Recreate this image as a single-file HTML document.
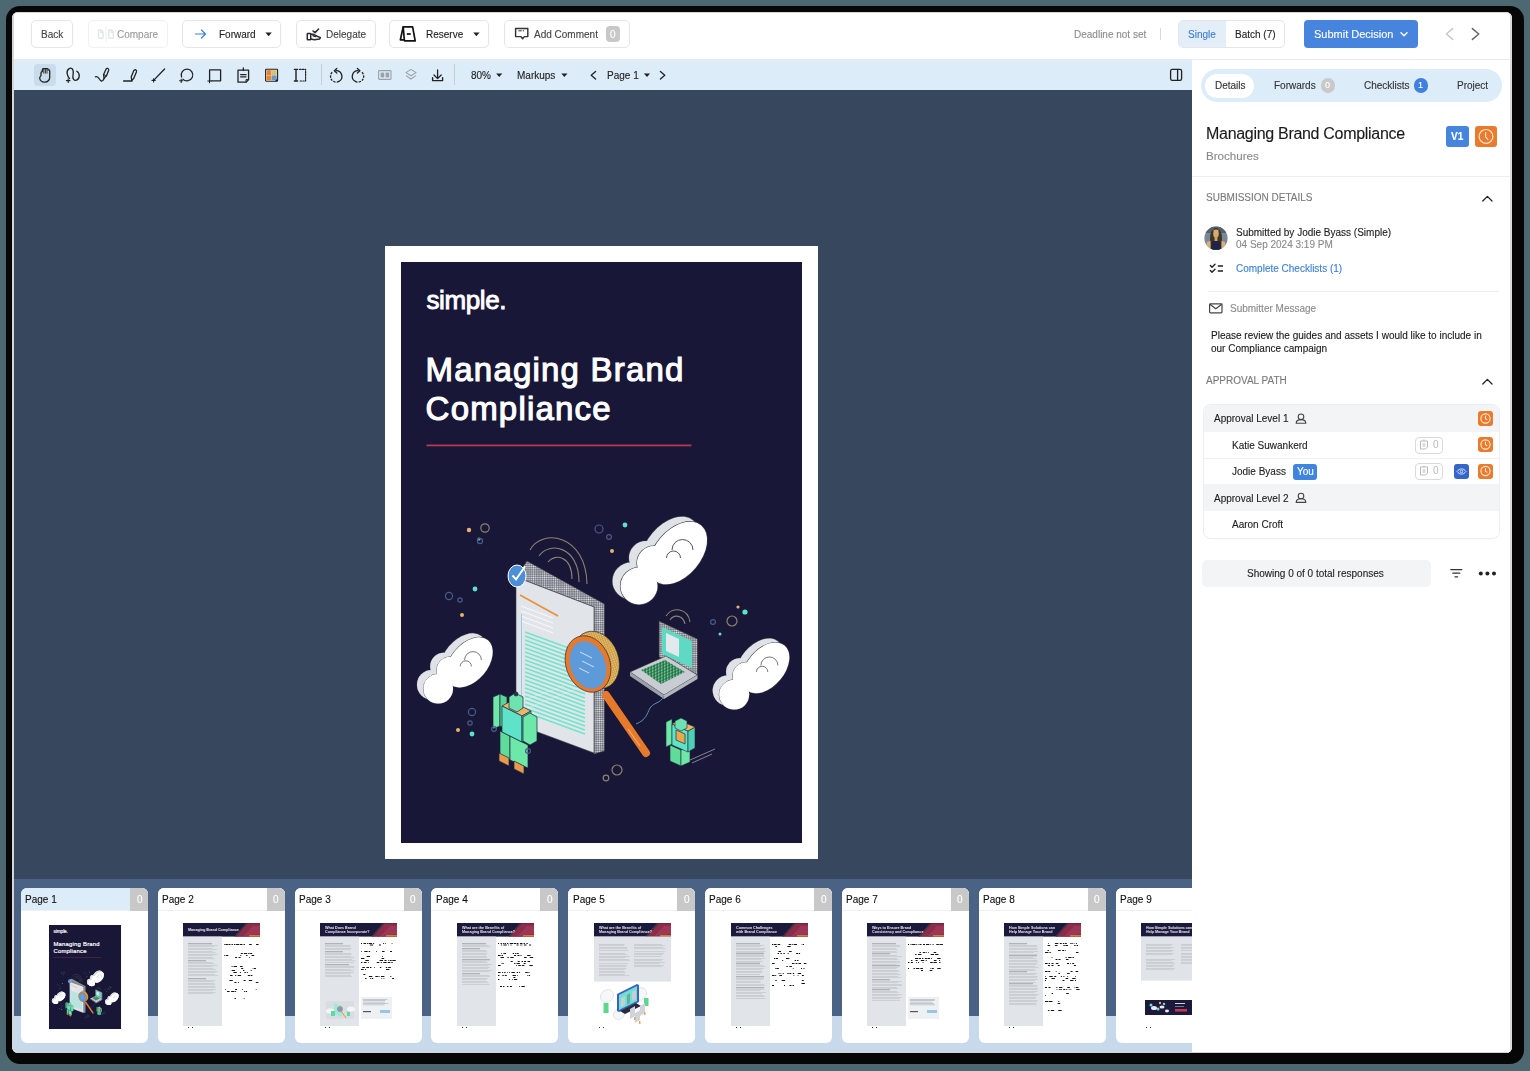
<!DOCTYPE html>
<html><head><meta charset="utf-8">
<style>
*{box-sizing:border-box;margin:0;padding:0}
html,body{width:1530px;height:1071px;overflow:hidden;background:#4d6870;font-family:"Liberation Sans",sans-serif;color:#222}
.a{position:absolute}
.tx{position:absolute;line-height:1;white-space:nowrap;will-change:transform;-webkit-text-stroke:0.12px currentColor}
svg{position:absolute;overflow:visible}
#frame{position:absolute;left:6px;top:6px;width:1518px;height:1058px;background:#070707;border-radius:14px}
#app{position:absolute;left:12px;top:12px;width:1500px;height:1041px;background:#fff;border-radius:6px;overflow:hidden}
#w{position:absolute;left:-12px;top:-12px;width:1530px;height:1071px}
.btn{position:absolute;top:20px;height:28px;border:1px solid #e3e5e9;border-radius:5px;background:#fff}
</style></head><body>
<div id="frame"></div>
<div id="app"><div id="w">
<div class="a" style="left:12px;top:12px;width:1500px;height:1px;background:#d4d6da;"></div>
<div class="a" style="left:1192px;top:59px;width:320px;height:1px;background:#e8eaee;"></div>
<div class="a" style="left:12px;top:59px;width:1180px;height:1px;background:#e8eaee;"></div>
<div class="btn" style="left:31px;width:42px;border-color:#e3e5e9"></div>
<div class="btn" style="left:88px;width:80px;border-color:#eff1f3"></div>
<div class="btn" style="left:182px;width:99px;border-color:#e3e5e9"></div>
<div class="btn" style="left:296px;width:80px;border-color:#e3e5e9"></div>
<div class="btn" style="left:389px;width:100px;border-color:#e3e5e9"></div>
<div class="btn" style="left:504px;width:126px;border-color:#e3e5e9"></div>
<div class="tx" style="left:40.5px;top:30.14px;font-size:10px;color:#444;">Back</div>
<div class="tx" style="left:117px;top:30.14px;font-size:10px;color:#9a9a9a;">Compare</div>
<div class="tx" style="left:218.5px;top:30.14px;font-size:10px;color:#1e1e1e;">Forward</div>
<div class="tx" style="left:325.5px;top:30.14px;font-size:10px;color:#444;">Delegate</div>
<div class="tx" style="left:425.5px;top:30.14px;font-size:10px;color:#1e1e1e;">Reserve</div>
<div class="tx" style="left:533.5px;top:30.14px;font-size:10px;color:#444;">Add Comment</div>
<svg style="left:0;top:0" width="1" height="1"><g fill="none" stroke="#e1e4e8" stroke-width="1.3" stroke-linejoin="round">
<path d="M98.5 29.8h2.6l1.9 2.2v6.2h-4.5z"/><path d="M108.8 29.8h2.6l1.9 2.2v6.2h-4.5z"/><path d="M100.8 30v2.4h2.2M111.1 30v2.4h2.2" stroke-width="1.1"/><path d="M106 26v16" stroke="#eef0f3" stroke-width="1.1"/></g></svg>
<svg style="left:0;top:0" width="1" height="1"><g fill="none" stroke="#3f7fd6" stroke-width="1.2" stroke-linecap="round" stroke-linejoin="round">
<path d="M195.5 34h10M201.5 30l4 4-4 4"/></g></svg>
<svg style="left:0;top:0" width="1" height="1"><path d="M265.40000000000003 32.6h6.4l-3.2 3.6z" fill="#222"/></svg>
<svg style="left:0;top:0" width="1" height="1"><path d="M473.2 32.6h6.4l-3.2 3.6z" fill="#222"/></svg>
<svg style="left:0;top:0" width="1" height="1"><g fill="none" stroke="#2a2a30" stroke-width="1.5" stroke-linejoin="round" stroke-linecap="round">
<path d="M313 31l2 1.6 3.6-3.6"/>
<rect x="307.3" y="33.4" width="3.4" height="6.4" rx="0.6"/>
<path d="M310.7 34.2h2.4l4 2 3.4 1.4-1 1.4-5 .8-3.8-.8"/><path d="M313 35.8l2.8 .8"/></g></svg>
<svg style="left:0;top:0" width="1" height="1"><g fill="none" stroke="#111" stroke-width="1.7" stroke-linejoin="round">
<path d="M403.2 26.8h9.4l2.6 14h-10.8z"/><path d="M403.2 26.8l-2.8 13h4"/><path d="M406.8 34h4"/></g></svg>
<svg style="left:0;top:0" width="1" height="1"><g fill="none" stroke="#333" stroke-width="1.45" stroke-linejoin="round">
<path d="M515.6 28.4h12.2v8.2h-3.4l-1.8 2.2-1.6-2.2h-5.4z"/><path d="M518.4 30.8h3.4M522.8 30.8h1.2" stroke-width="1"/></g></svg>
<div class="a" style="left:606px;top:26px;width:14px;height:16px;border-radius:4px;background:#c8c8c8"></div>
<div class="tx" style="left:610.2px;top:29.74px;font-size:10px;color:#fff;">0</div>
<div class="tx" style="left:1073.5px;top:30.33px;font-size:10px;color:#8c8c8c;">Deadline not set</div>
<div class="a" style="left:1159.5px;top:28px;width:1px;height:12px;background:#d9d9d9;"></div>
<div class="btn" style="left:1178px;width:107px;overflow:hidden"><div class="a" style="left:0;top:0;width:47px;height:26px;background:#e4eef8"></div></div>
<div class="tx" style="left:1188px;top:30.14px;font-size:10px;color:#3d7dd3;">Single</div>
<div class="tx" style="left:1235px;top:30.14px;font-size:10px;color:#222;">Batch (7)</div>
<div class="a" style="left:1304px;top:20px;width:114px;height:28px;border-radius:4px;background:#4684dd"></div>
<div class="tx" style="left:1313.5px;top:29.29px;font-size:11px;color:#fff;">Submit Decision</div>
<svg style="left:0;top:0" width="1" height="1"><g fill="none" stroke-linecap="round" stroke-linejoin="round">
<path d="M1401 32.8l3 3 3-3" stroke="#fff" stroke-width="1.5"/>
<path d="M1452.6 28.6L1446.4 34l6.2 5.4" stroke="#c5c9cf" stroke-width="1.5"/>
<path d="M1472.4 28.6L1478.8 34l-6.4 5.4" stroke="#63666e" stroke-width="1.5"/></g></svg>
<div class="a" style="left:12px;top:60px;width:1180px;height:30px;background:#dcecf8;"></div>
<div class="a" style="left:34px;top:64px;width:22px;height:22px;border-radius:4px;background:#c9dcec"></div>
<svg style="left:0;top:0" width="1" height="1"><g fill="none" stroke="#222" stroke-width="1.3" stroke-linecap="round" stroke-linejoin="round">
<!-- hand -->
<path d="M41 75.5v-2.5c0-.8.6-1.3 1.3-1.3v-1.8c0-.7.5-1.2 1.2-1.2h3.6c.7 0 1.2.5 1.2 1.2v-.2c.8 0 1.4.6 1.4 1.4v6.4c0 2.6-2.2 4.6-4.6 4.6h-.8c-2.6 0-4.6-2-4.6-4.6z"/>
<path d="M43.8 69v4.2M45.4 69v4.2M47 69v4.2" stroke-width="0.9"/>
<!-- lasso -->
<path d="M69.6 78.6C67.4 76.4 65.4 71 69.2 68.6C72.6 66.8 74 71 73 75C72.2 79 74.2 80.8 76.4 80.2C79.6 79.2 80.6 73.6 76.8 71.2"/>
<path d="M66.4 80.6h3.6M68.2 78.8v3.6" stroke-width="1.1"/>
<!-- pen -->
<path d="M95.4 76.8c1.8-.8 3 .4 4 2.2.9 1.6 2.2 2.8 3.6 1.4l1.2-2"/>
<path d="M104 78.2l-.4-3.8 2.4-5.2c.4-.8 1.3-1.1 2-.7.7.4.9 1.2.6 2l-2.2 5.4z"/><path d="M103.8 74.6l2.6 1.2" stroke-width="1"/>
<!-- highlighter -->
<path d="M123.6 81h8.4"/>
<path d="M131.8 80.6l-.6-3.6 2.6-6.4c.4-.8 1.4-1.1 2-.7.7.4.9 1.2.6 2l-2.6 6.4z"/>
<!-- line -->
<path d="M153.6 80.4l11-11.4"/><path d="M152 80.4h3.2M153.6 78.8v3.2" stroke-width="1.1"/>
<!-- circle -->
<path d="M182.9 79.1A5.8 5.8 0 1 0 181.55 77"/><path d="M179.6 80.8h3.2M181.2 79.2v3.2" stroke-width="1.1"/>
<!-- square -->
<path d="M209.6 79.6v-9.8h11v11h-9.6"/><path d="M207.8 81h3.4M209.5 79.3v3.4" stroke-width="1.1"/>
<!-- clipboard -->
<path d="M238 70.2h10.6v9.4l-2.6 2.6h-8z"/><path d="M243.3 68v2.4M240.6 74.6h5.4M240.6 76.8h5.4"/><path d="M246 82.2v-2.6h2.6" stroke-width="1"/>
<!-- palette -->
<rect x="265.6" y="69.2" width="12" height="12" rx="0.6" stroke-width="1.1"/>
<!-- text crop -->
<path d="M294.4 69.4h3.2M294.4 81h3.2M296 69.4v11.6" stroke-width="1.4"/>
<path d="M299.6 69.4h6v11.6h-6" stroke-dasharray="1.4 1.3" stroke-width="1.2"/>
<!-- rotate left -->
<path d="M336.2 70.7A5.7 5.7 0 0 1 338.88 81.43"/><path d="M338.88 81.43A5.7 5.7 0 0 1 332.54 72.03" stroke-dasharray="2.3 1.1" stroke-linecap="butt"/><path d="M336.8 68.5l-2.5 2.3 2.5 2.3"/>
<!-- rotate right -->
<path d="M358 70.7A5.7 5.7 0 0 0 355.32 81.43"/><path d="M355.32 81.43A5.7 5.7 0 0 0 361.66 72.03" stroke-dasharray="2.3 1.1" stroke-linecap="butt"/><path d="M357.4 68.5l2.5 2.3-2.5 2.3"/>
<!-- download -->
<path d="M437.6 70v8.6M434 75l3.6 3.6 3.6-3.6"/><path d="M432.6 77.6v3h10v-3" stroke-width="1.4"/>
<!-- panel toggle -->
<rect x="1170.6" y="69.4" width="11" height="11" rx="1.6" stroke-width="1.3"/><path d="M1177.6 69.6v10.8" stroke-width="1.3"/>
</g>
<g fill="none" stroke="#9aa1a8" stroke-width="1.1" stroke-linejoin="round">
<rect x="378.6" y="70.6" width="12.4" height="8.8" rx="0.6"/>
<path d="M411 69.4l5 3.2-5 3.2-5-3.2z"/><path d="M406 75.6l5 3.4 5-3.4"/>
</g>
<rect x="380.6" y="72.6" width="3.6" height="4.8" fill="#9aa1a8"/><rect x="385.6" y="72.6" width="3.6" height="4.8" fill="#9aa1a8"/>
<rect x="266.6" y="70.2" width="4.8" height="4.8" fill="#e8832f"/><rect x="271.8" y="70.2" width="4.8" height="4.8" fill="#d4c56a"/>
<rect x="266.6" y="75.4" width="4.8" height="4.8" fill="#e8832f"/><rect x="271.8" y="75.4" width="4.8" height="4.8" fill="#6d95c6"/>
<path d="M274.8 81.2l2.6-2.6v2.6z" fill="#222"/>
</svg>
<div class="a" style="left:320.5px;top:64px;width:1px;height:21px;background:#c6cdd4;"></div>
<div class="a" style="left:453.5px;top:64px;width:1px;height:21px;background:#c6cdd4;"></div>
<div class="tx" style="left:470.5px;top:71.13px;font-size:10px;color:#222;">80%</div>
<div class="tx" style="left:517px;top:71.13px;font-size:10px;color:#222;">Markups</div>
<div class="tx" style="left:606.5px;top:71.13px;font-size:10px;color:#222;">Page 1</div>
<svg style="left:0;top:0" width="1" height="1"><path d="M496.09999999999997 73.6h6.2l-3.1 3.4z" fill="#222"/><path d="M561.3 73.6h6.2l-3.1 3.4z" fill="#222"/><path d="M643.9 73.6h6.2l-3.1 3.4z" fill="#222"/><g fill="none" stroke="#222" stroke-width="1.3" stroke-linecap="round" stroke-linejoin="round">
<path d="M595.6 71.4l-4.4 3.8 4.4 3.8M660.4 71.4l4.4 3.8-4.4 3.8"/></g></svg>
<div class="a" style="left:14px;top:90px;width:1178px;height:789px;background:#37475e;"></div>
<div class="a" style="left:385px;top:246px;width:433px;height:613px;background:#fff;"></div>
<div class="a" style="left:401px;top:262px;width:401px;height:581px;background:#181737;overflow:hidden">
<svg style="left:-401px;top:-262px" width="1530" height="1071">
<defs>
<pattern id="dots" width="2.2" height="2.2" patternUnits="userSpaceOnUse"><rect width="2.2" height="2.2" fill="#6f737b"/><circle cx="1.1" cy="1.1" r="0.75" fill="#e6e8ec"/></pattern>
<pattern id="gdots" width="2.2" height="2.2" patternUnits="userSpaceOnUse"><rect width="2.2" height="2.2" fill="#c99a3e"/><circle cx="1.1" cy="1.1" r="0.7" fill="#f0d08a"/></pattern>
<pattern id="keys" width="3" height="3" patternUnits="userSpaceOnUse" patternTransform="skewY(-24)"><rect width="3" height="3" fill="#2b3b3a"/><rect x="0.5" y="0.5" width="2.2" height="2.2" fill="#5be08f"/></pattern>
<g id="cloud">
 <g fill="#dfe2e6" stroke="#40404c" stroke-width="1.2">
  <circle cx="31" cy="76" r="18.5"/><circle cx="46" cy="53" r="17"/><ellipse cx="70" cy="43" rx="23" ry="36" transform="rotate(40 70 43)"/>
 </g>
 <g fill="#dfe2e6">
  <circle cx="31" cy="76" r="18.5"/><circle cx="46" cy="53" r="17"/><ellipse cx="70" cy="43" rx="23" ry="36" transform="rotate(40 70 43)"/>
 </g>
 <g fill="#fff" stroke="#40404c" stroke-width="1.2">
  <circle cx="39" cy="81" r="18.5"/><circle cx="54" cy="58" r="17"/><ellipse cx="78" cy="48" rx="23" ry="36" transform="rotate(40 78 48)"/>
 </g>
 <g fill="#fff">
  <circle cx="39" cy="81" r="18.5"/><circle cx="54" cy="58" r="17"/><ellipse cx="78" cy="48" rx="23" ry="36" transform="rotate(40 78 48)"/>
 </g>
 <g fill="none" stroke="#55555f" stroke-width="1"><path d="M72 45a10.5 10.5 0 0 1 21 0"/><path d="M66.5 53a7 7 0 0 1 14 0"/></g>
</g>
</defs>
<g id="coverg"><rect x="401" y="262" width="401" height="581" fill="#181737"/>
<text x="426.5" y="309" font-family="Liberation Sans" font-size="26" letter-spacing="-0.4" fill="#fff" stroke="#fff" stroke-width="0.9">simple.</text>
<text x="425.6" y="380.6" font-family="Liberation Sans" font-size="33" letter-spacing="1.2" fill="#fff" stroke="#fff" stroke-width="1.1">Managing Brand</text>
<text x="425.6" y="419.6" font-family="Liberation Sans" font-size="33" letter-spacing="1.2" fill="#fff" stroke="#fff" stroke-width="1.1">Compliance</text>
<rect x="426.5" y="444.5" width="265" height="1.8" fill="#b8394c"/>
<use href="#cloud" transform="translate(600 505)"/>
<use href="#cloud" transform="translate(407 624) scale(0.8)"/>
<use href="#cloud" transform="translate(702.6 629) scale(0.81)"/>

<!-- wifi arcs over doc -->
<g fill="none" stroke="#8d8270" stroke-width="1.1">
 <path d="M530 550c12-22 56-16 57 34"/><path d="M539 556c10-15 40-10 40 26"/><path d="M548 562c7-9 24-6 24 17"/>
 <path d="M666 616c6-10 22-8 24 6"/><path d="M670 620c4-6 13-5 15 4"/>
</g>

<!-- document slab -->
<polygon points="527,561 604.5,604 604.5,751 594,754 594,607 516,577" fill="url(#dots)" stroke="#333" stroke-width="0.5"/>
<polygon points="516,577 594,607 594,753 516,724" fill="#e1e4e9" stroke="#3a3a48" stroke-width="0.6"/>
<g stroke="#f6f7f9" stroke-width="1.2">
 <path d="M521 606l32 12M521 611l32 12M521 616l32 12M521 621l32 12"/>
</g>
<path d="M520 595l38 21" stroke="#e8913a" stroke-width="1.6"/>
<g stroke="#6fe6cc" stroke-width="1.6"><path d="M525 632l60 22M525 636l60 22M525 640l60 22M525 644l60 22M525 648l60 22M525 652l60 22M525 656l60 22M525 660l60 22M525 664l60 22M525 668l60 22M525 672l60 22M525 676l60 22M525 680l60 22M525 684l60 22M525 688l60 22M525 692l60 22M525 696l60 22M525 700l60 22M525 704l60 22M525 708l60 22M525 712l60 22"/></g><path d="M521.5 614v82" stroke="#7fc4ea" stroke-width="0.8"/><path d="M524 700l40-14M528 708l50-20" stroke="#f2f4f8" stroke-width="0.6" opacity="0.7"/>
<ellipse cx="517" cy="576" rx="9" ry="11" fill="#4d8fd6" stroke="#fff" stroke-width="1"/>
<path d="M512.5 575.5l3.5 4 9-13" fill="none" stroke="#fff" stroke-width="2"/>

<!-- magnifier -->
<ellipse cx="596" cy="660" rx="22.5" ry="29.5" transform="rotate(-20 596 660)" fill="url(#gdots)" stroke="#2a2030" stroke-width="0.6"/>
<ellipse cx="588" cy="664" rx="22" ry="29" transform="rotate(-20 588 664)" fill="#e7792b" stroke="#2a2030" stroke-width="0.6"/>
<ellipse cx="588" cy="665" rx="17.5" ry="24.5" transform="rotate(-20 588 665)" fill="#5e9ad8"/>
<g stroke="#d9e8f6" stroke-width="0.9"><path d="M580 652l12 6M582 661l12 6M579 668l10 5"/></g>
<path d="M606 695l40 58" stroke="#e7792b" stroke-width="8" stroke-linecap="round"/>
<path d="M628 729l12 17" stroke="#f3c9a0" stroke-width="0.8"/>

<!-- laptop -->
<polygon points="659,621 697.5,639 697.5,675 659,657" fill="url(#dots)" stroke="#333" stroke-width="0.6"/>
<polygon points="662,627 692,641 692,668 662,654" fill="#5fd9c3"/>
<polygon points="666,633 679,639 679,657 666,651" fill="#e3e8ec"/>
<polygon points="630,672 666,656 697.5,675 664,695" fill="#c9ccd2" stroke="#333" stroke-width="0.6"/>
<polygon points="630,672 664,695 664,699 630,676" fill="#9da0a6"/>
<polygon points="664,695 697.5,675 697.5,679 664,699" fill="#b3b6bc"/>
<polygon points="641,670 665,660 685,672 661,684" fill="url(#keys)"/>
<path d="M664 696c-4 8-10 6-14 12-3 6-4 12-14 16" fill="none" stroke="#5a8fb5" stroke-width="1"/>

<!-- left robot -->
<g stroke="#1e2638" stroke-width="0.7" stroke-linejoin="round">
<polygon points="500,731 510,736 510,760 500,755" fill="#5fdc9a"/>
<polygon points="510,736 528,745 528,768 510,760" fill="#6ee8a8"/>
<polygon points="499,753 509,758 509,766 499,761" fill="#e89a4e"/>
<polygon points="514,761 524,766 524,774 514,769" fill="#e89a4e"/>
<polygon points="493,697 500,694 500,726 493,729" fill="#6ee8a8"/>
<polygon points="500,694 507,697 507,729 500,726" fill="#5ad596"/>
<polygon points="502,706 511,701 531,711 522,716" fill="#f0b56a"/>
<polygon points="502,706 522,716 522,742 502,732" fill="#5ee3c8"/>
<polygon points="522,716 531,711 531,737 522,742" fill="#4fcfb5"/>
<polygon points="523,717 530,713 537,717 537,741 530,745 523,741" fill="#6ee8a8"/>
<polygon points="509,697 515,693 523,697 523,708 517,712 509,708" fill="#6ee2b0"/>
<circle cx="516" cy="694" r="2" fill="#2a3550"/>
</g>
<!-- right robot -->
<g stroke="#1e2638" stroke-width="0.6" stroke-linejoin="round">
<polygon points="670,745 681,750 681,766 670,761" fill="#5fdc9a"/>
<polygon points="681,750 690,746 690,762 681,766" fill="#6ee8a8"/>
<polygon points="666,722 672,719 672,744 666,747" fill="#6ee8a8"/>
<polygon points="672,724 688,731 688,752 672,745" fill="#5ee3c8"/>
<polygon points="688,731 695,727 695,748 688,752" fill="#4fcfb5"/>
<polygon points="672,724 678,720 695,727 688,731" fill="#f0b56a"/>
<polygon points="675,721 681,718 687,721 687,728 681,731 675,728" fill="#6ee2b0"/>
<rect x="676" y="731" width="9" height="10" fill="#e8a94e" transform="skewY(24) translate(0 -302)"/>
</g>
<path d="M690 760l25-11M692 763l20-9" stroke="#ccc" stroke-width="0.6"/>

<!-- dots -->
<g fill="#e8b26a"><circle cx="469" cy="530" r="2.2"/><circle cx="612" cy="551" r="2"/><circle cx="462" cy="615" r="2"/><circle cx="458" cy="730" r="2"/><circle cx="738" cy="607" r="1.6"/></g>
<g fill="#5fe3c8"><circle cx="625" cy="525" r="2.4"/><circle cx="475" cy="589" r="2.4"/><circle cx="472" cy="734" r="2.4"/><circle cx="745" cy="612" r="2.6"/><circle cx="479" cy="539" r="1.5"/><circle cx="720" cy="634" r="1.5"/></g>
<g fill="none" stroke="#8d8270" stroke-width="1.2"><circle cx="485" cy="528" r="4.2"/><circle cx="732" cy="621" r="5"/><circle cx="617" cy="770" r="5"/><circle cx="606" cy="778" r="2.8"/></g>
<g fill="none" stroke="#4b5a88" stroke-width="1.2"><circle cx="480" cy="541" r="2.6"/><circle cx="449" cy="596" r="3.6"/><circle cx="460" cy="600" r="2.2"/><circle cx="599" cy="529" r="4"/><circle cx="609" cy="537" r="2.4"/><circle cx="472" cy="712" r="3.6"/><circle cx="470" cy="723" r="2.2"/><circle cx="713" cy="622" r="2.4"/><circle cx="494" cy="729" r="2.4"/><circle cx="528" cy="751" r="2.4"/></g>
</g></svg></div>
<div class="a" style="left:1192px;top:60px;width:320px;height:993px;background:#fff;"></div>
<div class="a" style="left:1201px;top:69px;width:301px;height:33px;border-radius:17px;background:#dcecf8"></div>
<div class="a" style="left:1205px;top:74px;width:49px;height:24px;border-radius:12px;background:#fff"></div>
<div class="tx" style="left:1214.5px;top:81.03px;font-size:10px;color:#333;">Details</div>
<div class="tx" style="left:1274px;top:81.03px;font-size:10px;color:#333;">Forwards</div>
<div class="a" style="left:1321px;top:78px;width:14px;height:15px;border-radius:8px;background:#c9c9c9"></div>
<div class="tx" style="left:1325.3px;top:81.38px;font-size:9px;color:#fff;">0</div>
<div class="tx" style="left:1364px;top:81.03px;font-size:10px;color:#333;">Checklists</div>
<div class="a" style="left:1414px;top:78px;width:14px;height:15px;border-radius:8px;background:#3f7fe0"></div>
<div class="tx" style="left:1418.3px;top:81.38px;font-size:9px;color:#fff;">1</div>
<div class="tx" style="left:1457px;top:81.03px;font-size:10px;color:#333;">Project</div>
<div class="tx" style="left:1205.5px;top:125.56px;font-size:16px;color:#1a1a1a;letter-spacing:-0.3px">Managing Brand Compliance</div>
<div class="tx" style="left:1205.5px;top:149.68px;font-size:11.6px;color:#8a8a8a;">Brochures</div>
<div class="a" style="left:1446px;top:126px;width:23px;height:21px;border-radius:3px;background:#4684dd"></div>
<div class="tx" style="left:1450.5px;top:132.23px;font-size:10px;color:#fff;font-weight:bold">V1</div>
<div class="a" style="left:1475px;top:126px;width:22px;height:21px;border-radius:3px;background:#e87b2e"></div>
<svg style="left:0;top:0" width="1" height="1"><g fill="none" stroke="#fbe3cf" stroke-width="1.2"><circle cx="1486" cy="136.4" r="6.9"/><path d="M1485.6 132.2v4.6l2.6 3"/></g></svg>
<div class="a" style="left:1192px;top:176px;width:320px;height:1px;background:#eceef0;"></div>
<div class="tx" style="left:1205.5px;top:193.03px;font-size:10px;color:#7a7a7a;letter-spacing:0px">SUBMISSION DETAILS</div>
<svg style="left:0;top:0" width="1" height="1"><g fill="none" stroke="#222" stroke-width="1.3" stroke-linecap="round" stroke-linejoin="round"><path d="M1482.8 201l4.6-4.6 4.6 4.6"/><path d="M1482.8 384l4.6-4.6 4.6 4.6"/></g></svg>
<svg style="left:0;top:0" width="1" height="1"><defs><clipPath id="av"><circle cx="1216" cy="238.2" r="11.6"/></clipPath></defs>
<g clip-path="url(#av)"><rect x="1204" y="226" width="24" height="24" fill="#7a8796"/>
<rect x="1204" y="226" width="24" height="7" fill="#56616e"/>
<path d="M1210 251v-12c0-7 2.5-11 6-11s6 4 6 11v12z" fill="#3d3526"/>
<ellipse cx="1216" cy="233.6" rx="2.8" ry="4.2" fill="#d9ab73"/>
<rect x="1214.6" y="236" width="2.8" height="5" fill="#d2a26a"/>
<path d="M1211 251l.6-10h8.8l.6 10z" fill="#1f2444"/>
<path d="M1205 251l2-9 3.6-1.2v10.2z M1227 251l-2-9-3.6-1.2v10.2z" fill="#dcae78"/>
<path d="M1213.4 229.6l1.2 1.4M1218.4 229.6l-1.2 1.6" stroke="#e9c48e" stroke-width="0.8"/>
</g></svg>
<div class="tx" style="left:1235.5px;top:228.03px;font-size:10px;color:#222;">Submitted by Jodie Byass (Simple)</div>
<div class="tx" style="left:1235.5px;top:240.44px;font-size:10px;color:#8a8a8a;">04 Sep 2024 3:19 PM</div>
<svg style="left:0;top:0" width="1" height="1"><g fill="none" stroke="#222" stroke-width="1.4" stroke-linecap="round" stroke-linejoin="round">
<path d="M1210.4 265.6l1.6 1.6 3-3M1210.4 270.6l1.6 1.6 3-3"/><path d="M1217.8 266h5.2M1217.8 271h5.2" stroke-width="1.6" stroke-linecap="butt"/></g></svg>
<div class="tx" style="left:1235.5px;top:264.04px;font-size:10px;color:#3a7fd6;">Complete Checklists (1)</div>
<div class="a" style="left:1208px;top:291px;width:291px;height:1px;background:#eceef0;"></div>
<svg style="left:0;top:0" width="1" height="1"><g fill="none" stroke="#444" stroke-width="1.2" stroke-linejoin="round"><rect x="1209.6" y="303.8" width="12.4" height="9" rx="0.8"/><path d="M1209.8 304.2l6 4.6 6-4.6"/></g></svg>
<div class="tx" style="left:1229.5px;top:304.24px;font-size:10px;color:#8a8a8a;">Submitter Message</div>
<div class="tx" style="left:1211px;top:330.84px;font-size:10px;color:#1a1a1a;">Please review the guides and assets I would like to include in</div>
<div class="tx" style="left:1211px;top:343.64px;font-size:10px;color:#1a1a1a;">our Compliance campaign</div>
<div class="tx" style="left:1205.5px;top:376.44px;font-size:10px;color:#7a7a7a;">APPROVAL PATH</div>
<div class="a" style="left:1204px;top:405px;width:295px;height:133px;border-radius:7px;background:#fff;box-shadow:0 0 0 1px #eceef0, 0 1px 2px rgba(0,0,0,0.06);overflow:hidden">
<div class="a" style="left:0;top:0;width:295px;height:27px;background:#f3f4f6"></div>
<div class="a" style="left:0;top:79px;width:295px;height:27px;background:#f3f4f6"></div>
<div class="a" style="left:0;top:53px;width:295px;height:1px;background:#eef0f2"></div>
</div>
<div class="tx" style="left:1213.8px;top:414.24px;font-size:10px;color:#1e1e1e;">Approval Level 1</div>
<div class="tx" style="left:1213.8px;top:493.94px;font-size:10px;color:#1e1e1e;">Approval Level 2</div>
<div class="tx" style="left:1232px;top:440.84px;font-size:10px;color:#1e1e1e;">Katie Suwankerd</div>
<div class="tx" style="left:1232px;top:467.34px;font-size:10px;color:#1e1e1e;">Jodie Byass</div>
<div class="tx" style="left:1232px;top:520.03px;font-size:10px;color:#1e1e1e;">Aaron Croft</div>
<svg style="left:0;top:0" width="1" height="1"><g fill="none" stroke="#444" stroke-width="1.1"><circle cx="1301" cy="416.8" r="2.8"/><path d="M1296.2 423.2c0-2.4 2-3.6 4.8-3.6s4.8 1.2 4.8 3.6z"/></g></svg>
<svg style="left:0;top:0" width="1" height="1"><g fill="none" stroke="#444" stroke-width="1.1"><circle cx="1301" cy="496" r="2.8"/><path d="M1296.2 502.4c0-2.4 2-3.6 4.8-3.6s4.8 1.2 4.8 3.6z"/></g></svg>
<div class="a" style="left:1478px;top:411px;width:15px;height:15px;border-radius:3px;background:#e87b2e"></div>
<svg style="left:0;top:0" width="1" height="1"><g fill="none" stroke="#fde6d2" stroke-width="1.1"><circle cx="1485.5" cy="418.5" r="4.6"/><path d="M1485.5 415.8v2.9l1.8 1.2"/></g></svg>
<div class="a" style="left:1478px;top:437px;width:15px;height:15px;border-radius:3px;background:#e87b2e"></div>
<svg style="left:0;top:0" width="1" height="1"><g fill="none" stroke="#fde6d2" stroke-width="1.1"><circle cx="1485.5" cy="444.5" r="4.6"/><path d="M1485.5 441.8v2.9l1.8 1.2"/></g></svg>
<div class="a" style="left:1478px;top:463.5px;width:15px;height:15px;border-radius:3px;background:#e87b2e"></div>
<svg style="left:0;top:0" width="1" height="1"><g fill="none" stroke="#fde6d2" stroke-width="1.1"><circle cx="1485.5" cy="471.0" r="4.6"/><path d="M1485.5 468.3v2.9l1.8 1.2"/></g></svg>
<div class="a" style="left:1415px;top:436.5px;width:28px;height:17px;border-radius:4px;border:1px solid #d9d9d9;background:#fff"></div>
<svg style="left:0;top:0" width="1" height="1"><g fill="none" stroke="#bbb" stroke-width="1"><path d="M1420.5 441.0h7v6l-2 2h-5z"/><path d="M1422.5 444.0h3M1422.5 446.0h3M1424 439.5v2"/></g></svg>
<div class="tx" style="left:1432.5px;top:440.14px;font-size:10px;color:#bdbdbd;">0</div>
<div class="a" style="left:1415px;top:462.5px;width:28px;height:17px;border-radius:4px;border:1px solid #d9d9d9;background:#fff"></div>
<svg style="left:0;top:0" width="1" height="1"><g fill="none" stroke="#bbb" stroke-width="1"><path d="M1420.5 467.0h7v6l-2 2h-5z"/><path d="M1422.5 470.0h3M1422.5 472.0h3M1424 465.5v2"/></g></svg>
<div class="tx" style="left:1432.5px;top:466.14px;font-size:10px;color:#bdbdbd;">0</div>
<div class="a" style="left:1293px;top:463.5px;width:24px;height:16px;border-radius:3px;background:#3f85e0"></div>
<div class="tx" style="left:1296.5px;top:467.04px;font-size:10px;color:#fff;">You</div>
<div class="a" style="left:1454px;top:464px;width:15px;height:15px;border-radius:3px;background:#3565c8"></div>
<svg style="left:0;top:0" width="1" height="1"><g fill="none" stroke="#cfe0ff" stroke-width="1"><path d="M1457 471.5c2.5-3.5 6.5-3.5 9 0-2.5 3.5-6.5 3.5-9 0z"/><circle cx="1461.5" cy="471.5" r="1.3"/></g></svg>
<div class="a" style="left:1202px;top:560px;width:229px;height:27px;border-radius:5px;background:#f3f4f6"></div>
<div class="tx" style="left:1247.3px;top:569.33px;font-size:10px;color:#1e1e1e;">Showing 0 of 0 total responses</div>
<svg style="left:0;top:0" width="1" height="1"><g fill="none" stroke="#333" stroke-width="1.3" stroke-linecap="round"><path d="M1450.8 569.6h11M1452.8 573.2h7M1455 576.8h2.6"/></g><g fill="#222"><circle cx="1480.8" cy="573.4" r="2"/><circle cx="1487.4" cy="573.4" r="2"/><circle cx="1494" cy="573.4" r="2"/></g></svg>
<div class="a" style="left:1510px;top:12px;width:2px;height:1041px;background:#d9dbdf;"></div>
<div class="a" style="left:14px;top:879px;width:1178px;height:137px;background:#4a6385;"></div>
<div class="a" style="left:14px;top:1016px;width:1178px;height:37px;background:#c8d9eb;"></div>
<div class="a" style="left:12px;top:12px;width:2px;height:1041px;background:#d4d6da;"></div>
<div class="a" style="left:21.00px;top:888px;width:127px;height:155px;border-radius:6px;background:#fff;overflow:hidden"><div class="a" style="left:0;top:0;width:127px;height:23px;background:#dcecf8;border-bottom:1px solid #eef0f3"></div><div class="a" style="left:109px;top:0;width:18px;height:22.5px;background:#c8c8c8"></div></div>
<div class="tx" style="left:25.3px;top:894.74px;font-size:10px;color:#111;">Page 1</div>
<div class="tx" style="left:136.5px;top:894.74px;font-size:10px;color:#fff;">0</div>
<svg style="left:49.00px;top:925px" width="77" height="106"><use href="#coverg" transform="scale(0.1796 0.179) translate(-401 -262)"/></svg>
<div class="a" style="left:157.83px;top:888px;width:127px;height:155px;border-radius:6px;background:#fff;overflow:hidden"><div class="a" style="left:0;top:0;width:127px;height:23px;background:#fff;border-bottom:1px solid #eef0f3"></div><div class="a" style="left:109px;top:0;width:18px;height:22.5px;background:#c8c8c8"></div></div>
<div class="tx" style="left:162.13px;top:894.74px;font-size:10px;color:#111;">Page 2</div>
<div class="tx" style="left:273.33px;top:894.74px;font-size:10px;color:#fff;">0</div>
<svg style="left:183.33px;top:923px" width="77" height="106"><rect x="0" y="0" width="77" height="13.6" fill="#1b1a3c"/><polygon points="53,13.6 64.5,0.3 77,0.3 77,13.6" fill="#8b2d48"/><polygon points="60,13.6 70,3 77,3 77,11" fill="#a0395a" opacity="0.8"/><path d="M52 13.6L63.5 0.3" stroke="#4a3a48" stroke-width="1.2"/><rect x="66" y="12" width="11" height="1.6" fill="#c9803a"/><text x="5" y="8.2" font-size="3.7" font-family="Liberation Sans" font-weight="bold" fill="#e8e8f0">Managing Brand Compliance</text><rect x="0" y="13.6" width="39" height="89.4" fill="#e1e4e8"/><rect x="5" y="20.4" width="24" height="0.8" fill="#8d939b"/><rect x="5" y="22.0" width="29.7" height="0.55" fill="#b9bdc3"/><rect x="5" y="23.5" width="26.4" height="0.55" fill="#b9bdc3"/><rect x="5" y="25.0" width="24.3" height="0.55" fill="#b9bdc3"/><rect x="5" y="26.5" width="28.9" height="0.55" fill="#b9bdc3"/><rect x="5" y="28.0" width="24.6" height="0.55" fill="#b9bdc3"/><rect x="5" y="29.5" width="27.5" height="0.55" fill="#b9bdc3"/><rect x="5" y="31.0" width="29.5" height="0.55" fill="#b9bdc3"/><rect x="5" y="32.5" width="25.3" height="0.55" fill="#b9bdc3"/><rect x="5" y="34.0" width="24.5" height="0.55" fill="#b9bdc3"/><rect x="5" y="35.5" width="26.5" height="0.55" fill="#b9bdc3"/><rect x="5" y="37.4" width="18" height="0.8" fill="#8d939b"/><rect x="5" y="39.0" width="24.5" height="0.55" fill="#b9bdc3"/><rect x="5" y="40.5" width="26.5" height="0.55" fill="#b9bdc3"/><rect x="5" y="42.0" width="29.0" height="0.55" fill="#b9bdc3"/><rect x="5" y="43.5" width="24.7" height="0.55" fill="#b9bdc3"/><rect x="5" y="45.0" width="25.3" height="0.55" fill="#b9bdc3"/><rect x="5" y="46.5" width="27.8" height="0.55" fill="#b9bdc3"/><rect x="5" y="48.0" width="29.7" height="0.55" fill="#b9bdc3"/><rect x="5" y="49.5" width="27.5" height="0.55" fill="#b9bdc3"/><rect x="5" y="51.0" width="26.4" height="0.55" fill="#b9bdc3"/><rect x="5" y="52.5" width="29.9" height="0.55" fill="#b9bdc3"/><rect x="5" y="55.4" width="18" height="0.8" fill="#8d939b"/><rect x="5" y="57.0" width="27.3" height="0.55" fill="#b9bdc3"/><rect x="5" y="58.5" width="24.8" height="0.55" fill="#b9bdc3"/><rect x="5" y="60.0" width="26.5" height="0.55" fill="#b9bdc3"/><rect x="5" y="61.5" width="27.2" height="0.55" fill="#b9bdc3"/><rect x="5" y="63.0" width="27.4" height="0.55" fill="#b9bdc3"/><rect x="5" y="64.5" width="27.4" height="0.55" fill="#b9bdc3"/><rect x="5" y="66.0" width="28.1" height="0.55" fill="#b9bdc3"/><rect x="5" y="67.5" width="24.6" height="0.55" fill="#b9bdc3"/><rect x="5" y="69.0" width="27.4" height="0.55" fill="#b9bdc3"/><rect x="5" y="70.5" width="25.1" height="0.55" fill="#b9bdc3"/><rect x="41.0" y="21.0" width="0.7" height="1" fill="#151515"/><rect x="42.3" y="21.0" width="2.6" height="1" fill="#151515"/><rect x="45.5" y="21.0" width="2" height="1" fill="#151515"/><rect x="48.5" y="21.0" width="1.4" height="1" fill="#151515"/><rect x="50.9" y="21.0" width="1.4" height="1" fill="#151515"/><rect x="52.9" y="21.0" width="3.4" height="1" fill="#151515"/><rect x="56.9" y="21.0" width="2.6" height="1" fill="#151515"/><rect x="60.5" y="21.0" width="1.4" height="1" fill="#151515"/><rect x="66.1" y="21.0" width="2.6" height="1" fill="#151515"/><rect x="73.0" y="21.0" width="2.6" height="1" fill="#151515"/><rect x="57.8" y="30.0" width="2" height="1" fill="#151515"/><rect x="60.8" y="30.0" width="3.4" height="1" fill="#151515"/><rect x="65.2" y="30.0" width="1.4" height="1" fill="#151515"/><rect x="67.2" y="30.0" width="2" height="1" fill="#151515"/><rect x="41.0" y="32.0" width="0.7" height="1" fill="#151515"/><rect x="42.7" y="32.0" width="2.6" height="1" fill="#151515"/><rect x="57.3" y="32.0" width="1" height="1" fill="#151515"/><rect x="63.1" y="32.0" width="1.4" height="1" fill="#151515"/><rect x="68.6" y="32.0" width="2.6" height="1" fill="#151515"/><rect x="52.1" y="34.0" width="2" height="1" fill="#151515"/><rect x="55.6" y="34.0" width="2" height="1" fill="#151515"/><rect x="66.2" y="34.0" width="0.7" height="1" fill="#151515"/><rect x="48.6" y="43.0" width="1" height="1" fill="#151515"/><rect x="50.6" y="43.0" width="3.4" height="1" fill="#151515"/><rect x="57.1" y="43.0" width="2.6" height="1" fill="#151515"/><rect x="58.2" y="45.0" width="2" height="1" fill="#151515"/><rect x="69.7" y="45.0" width="0.7" height="1" fill="#151515"/><rect x="71.0" y="45.0" width="2" height="1" fill="#151515"/><rect x="48.7" y="47.0" width="3.4" height="1" fill="#151515"/><rect x="60.0" y="47.0" width="1.4" height="1" fill="#151515"/><rect x="67.7" y="47.0" width="1" height="1" fill="#151515"/><rect x="50.4" y="49.0" width="3.4" height="1" fill="#151515"/><rect x="56.9" y="49.0" width="1" height="1" fill="#151515"/><rect x="61.4" y="49.0" width="1.4" height="1" fill="#151515"/><rect x="63.8" y="49.0" width="1" height="1" fill="#151515"/><rect x="47.0" y="52.0" width="2.6" height="1" fill="#151515"/><rect x="52.2" y="52.0" width="1" height="1" fill="#151515"/><rect x="54.7" y="52.0" width="3.4" height="1" fill="#151515"/><rect x="64.8" y="52.0" width="2.6" height="1" fill="#151515"/><rect x="68.0" y="52.0" width="1.4" height="1" fill="#151515"/><rect x="46.4" y="57.0" width="3.4" height="1" fill="#151515"/><rect x="60.6" y="57.0" width="2" height="1" fill="#151515"/><rect x="65.8" y="57.0" width="3.4" height="1" fill="#151515"/><rect x="51.4" y="59.0" width="2" height="1" fill="#151515"/><rect x="54.9" y="59.0" width="1" height="1" fill="#151515"/><rect x="72.8" y="59.0" width="2.6" height="1" fill="#151515"/><rect x="42.3" y="66.0" width="0.7" height="1" fill="#151515"/><rect x="52.1" y="66.0" width="2" height="1" fill="#151515"/><rect x="59.2" y="66.0" width="0.7" height="1" fill="#151515"/><rect x="72.8" y="66.0" width="0.7" height="1" fill="#151515"/><rect x="44.0" y="68.0" width="2.6" height="1" fill="#151515"/><rect x="48.1" y="68.0" width="3.4" height="1" fill="#151515"/><rect x="52.1" y="68.0" width="1" height="1" fill="#151515"/><rect x="61.1" y="68.0" width="1" height="1" fill="#151515"/><rect x="62.7" y="68.0" width="1.4" height="1" fill="#151515"/><rect x="51.5" y="75.0" width="1.4" height="1" fill="#151515"/><rect x="60.8" y="75.0" width="0.7" height="1" fill="#151515"/><rect x="5" y="104" width="1" height="1" fill="#333"/><rect x="9" y="104" width="1" height="1" fill="#333"/></svg>
<div class="a" style="left:294.66px;top:888px;width:127px;height:155px;border-radius:6px;background:#fff;overflow:hidden"><div class="a" style="left:0;top:0;width:127px;height:23px;background:#fff;border-bottom:1px solid #eef0f3"></div><div class="a" style="left:109px;top:0;width:18px;height:22.5px;background:#c8c8c8"></div></div>
<div class="tx" style="left:298.96px;top:894.74px;font-size:10px;color:#111;">Page 3</div>
<div class="tx" style="left:410.16px;top:894.74px;font-size:10px;color:#fff;">0</div>
<svg style="left:320.16px;top:923px" width="77" height="106"><rect x="0" y="0" width="77" height="13.6" fill="#1b1a3c"/><polygon points="53,13.6 64.5,0.3 77,0.3 77,13.6" fill="#8b2d48"/><polygon points="60,13.6 70,3 77,3 77,11" fill="#a0395a" opacity="0.8"/><path d="M52 13.6L63.5 0.3" stroke="#4a3a48" stroke-width="1.2"/><rect x="66" y="12" width="11" height="1.6" fill="#c9803a"/><text x="5" y="5.9" font-size="3.7" font-family="Liberation Sans" font-weight="bold" fill="#e8e8f0">What Does Brand</text><text x="5" y="10.4" font-size="3.7" font-family="Liberation Sans" font-weight="bold" fill="#e8e8f0">Compliance Incorporate?</text><rect x="0" y="13.6" width="39" height="89.4" fill="#e1e4e8"/><rect x="5" y="20.4" width="18" height="0.8" fill="#8d939b"/><rect x="5" y="22.0" width="25.5" height="0.55" fill="#b9bdc3"/><rect x="5" y="23.5" width="25.6" height="0.55" fill="#b9bdc3"/><rect x="5" y="25.0" width="26.6" height="0.55" fill="#b9bdc3"/><rect x="5" y="26.5" width="25.4" height="0.55" fill="#b9bdc3"/><rect x="5" y="28.4" width="18" height="0.8" fill="#8d939b"/><rect x="5" y="30.0" width="26.0" height="0.55" fill="#b9bdc3"/><rect x="5" y="31.5" width="26.6" height="0.55" fill="#b9bdc3"/><rect x="5" y="33.0" width="25.7" height="0.55" fill="#b9bdc3"/><rect x="5" y="34.5" width="29.3" height="0.55" fill="#b9bdc3"/><rect x="5" y="36.0" width="27.0" height="0.55" fill="#b9bdc3"/><rect x="5" y="37.5" width="29.9" height="0.55" fill="#b9bdc3"/><rect x="5" y="39.0" width="28.7" height="0.55" fill="#b9bdc3"/><rect x="5" y="41.4" width="24" height="0.8" fill="#8d939b"/><rect x="5" y="43.0" width="29.2" height="0.55" fill="#b9bdc3"/><rect x="5" y="44.5" width="29.2" height="0.55" fill="#b9bdc3"/><rect x="5" y="46.0" width="25.6" height="0.55" fill="#b9bdc3"/><rect x="5" y="47.5" width="28.5" height="0.55" fill="#b9bdc3"/><rect x="5" y="49.0" width="28.9" height="0.55" fill="#b9bdc3"/><rect x="5" y="50.5" width="25.7" height="0.55" fill="#b9bdc3"/><rect x="5" y="52.0" width="26.0" height="0.55" fill="#b9bdc3"/><rect x="5" y="53.5" width="26.9" height="0.55" fill="#b9bdc3"/><rect x="41.0" y="20.0" width="1" height="1" fill="#151515"/><rect x="43.5" y="20.0" width="2.6" height="1" fill="#151515"/><rect x="47.1" y="20.0" width="1" height="1" fill="#151515"/><rect x="48.7" y="20.0" width="3.4" height="1" fill="#151515"/><rect x="53.1" y="20.0" width="1" height="1" fill="#151515"/><rect x="63.1" y="20.0" width="1" height="1" fill="#151515"/><rect x="65.1" y="20.0" width="0.7" height="1" fill="#151515"/><rect x="71.7" y="20.0" width="0.7" height="1" fill="#151515"/><rect x="49.8" y="21.5" width="3.4" height="1" fill="#151515"/><rect x="59.0" y="21.5" width="2" height="1" fill="#151515"/><rect x="41.0" y="28.0" width="0.7" height="1" fill="#151515"/><rect x="44.3" y="28.0" width="3.4" height="1" fill="#151515"/><rect x="48.7" y="28.0" width="1.4" height="1" fill="#151515"/><rect x="56.3" y="28.0" width="0.7" height="1" fill="#151515"/><rect x="62.0" y="28.0" width="2.6" height="1" fill="#151515"/><rect x="70.0" y="28.0" width="2" height="1" fill="#151515"/><rect x="46.6" y="33.0" width="3.4" height="1" fill="#151515"/><rect x="62.0" y="33.0" width="0.7" height="1" fill="#151515"/><rect x="41.0" y="35.0" width="3.4" height="1" fill="#151515"/><rect x="61.6" y="35.0" width="2.6" height="1" fill="#151515"/><rect x="45.4" y="37.0" width="3.4" height="1" fill="#151515"/><rect x="59.6" y="37.0" width="3.4" height="1" fill="#151515"/><rect x="64.5" y="37.0" width="2" height="1" fill="#151515"/><rect x="68.0" y="37.0" width="0.7" height="1" fill="#151515"/><rect x="69.7" y="37.0" width="2" height="1" fill="#151515"/><rect x="72.3" y="37.0" width="3.4" height="1" fill="#151515"/><rect x="41.0" y="39.0" width="1.4" height="1" fill="#151515"/><rect x="43.9" y="39.0" width="2.6" height="1" fill="#151515"/><rect x="48.0" y="39.0" width="0.7" height="1" fill="#151515"/><rect x="56.7" y="39.0" width="2.6" height="1" fill="#151515"/><rect x="60.8" y="39.0" width="1" height="1" fill="#151515"/><rect x="63.3" y="39.0" width="3.4" height="1" fill="#151515"/><rect x="67.7" y="39.0" width="2.6" height="1" fill="#151515"/><rect x="71.3" y="39.0" width="1.4" height="1" fill="#151515"/><rect x="42.3" y="44.0" width="2.6" height="1" fill="#151515"/><rect x="46.4" y="44.0" width="2.6" height="1" fill="#151515"/><rect x="50.0" y="44.0" width="1.4" height="1" fill="#151515"/><rect x="54.1" y="44.0" width="0.7" height="1" fill="#151515"/><rect x="59.9" y="44.0" width="1.4" height="1" fill="#151515"/><rect x="65.8" y="44.0" width="1.4" height="1" fill="#151515"/><rect x="68.2" y="44.0" width="2.6" height="1" fill="#151515"/><rect x="41.0" y="46.0" width="2.6" height="1" fill="#151515"/><rect x="45.1" y="46.0" width="1" height="1" fill="#151515"/><rect x="66.0" y="46.0" width="3.4" height="1" fill="#151515"/><rect x="43.4" y="51.0" width="2" height="1" fill="#151515"/><rect x="48.9" y="53.0" width="3.4" height="1" fill="#151515"/><rect x="55.3" y="53.0" width="2.6" height="1" fill="#151515"/><rect x="58.5" y="53.0" width="1" height="1" fill="#151515"/><rect x="61.0" y="53.0" width="3.4" height="1" fill="#151515"/><rect x="70.3" y="53.0" width="1" height="1" fill="#151515"/><rect x="45.1" y="55.0" width="1.4" height="1" fill="#151515"/><rect x="50.1" y="55.0" width="0.7" height="1" fill="#151515"/><rect x="51.8" y="55.0" width="1.4" height="1" fill="#151515"/><rect x="61.4" y="55.0" width="0.7" height="1" fill="#151515"/><rect x="63.6" y="55.0" width="0.7" height="1" fill="#151515"/><rect x="72.1" y="55.0" width="2" height="1" fill="#151515"/><rect x="41" y="74" width="31" height="22" fill="#eef1f4"/><rect x="43" y="76.0" width="24.3" height="0.55" fill="#a0a6ae"/><rect x="43" y="77.4" width="22.3" height="0.55" fill="#a0a6ae"/><rect x="43" y="78.8" width="21.9" height="0.55" fill="#a0a6ae"/><rect x="43" y="80.2" width="25.2" height="0.55" fill="#a0a6ae"/><rect x="43" y="81.6" width="21.6" height="0.55" fill="#a0a6ae"/><rect x="43" y="88" width="8" height="1.2" fill="#555"/><rect x="60" y="87" width="10" height="3" fill="#9ac4e6"/><rect x="6" y="78" width="28" height="18" fill="#d9dde2"/><ellipse cx="10" cy="88" rx="4" ry="2.5" fill="#f4f5f7"/><ellipse cx="31" cy="86" rx="4" ry="2.5" fill="#f4f5f7"/><polygon points="14,80 22,83 22,94 14,91" fill="#9fe8dc"/><circle cx="20" cy="86" r="2.6" fill="#6aa2d8" stroke="#e7792b" stroke-width="0.6"/><rect x="11" y="88" width="4" height="5" fill="#5fd9a0"/><rect x="27" y="89" width="3" height="4" fill="#5fd9a0"/><path d="M21 88l5 7" stroke="#e8913a" stroke-width="1"/><rect x="5" y="104" width="1" height="1" fill="#333"/><rect x="9" y="104" width="1" height="1" fill="#333"/></svg>
<div class="a" style="left:431.49px;top:888px;width:127px;height:155px;border-radius:6px;background:#fff;overflow:hidden"><div class="a" style="left:0;top:0;width:127px;height:23px;background:#fff;border-bottom:1px solid #eef0f3"></div><div class="a" style="left:109px;top:0;width:18px;height:22.5px;background:#c8c8c8"></div></div>
<div class="tx" style="left:435.79px;top:894.74px;font-size:10px;color:#111;">Page 4</div>
<div class="tx" style="left:546.99px;top:894.74px;font-size:10px;color:#fff;">0</div>
<svg style="left:456.99px;top:923px" width="77" height="106"><rect x="0" y="0" width="77" height="13.6" fill="#1b1a3c"/><polygon points="53,13.6 64.5,0.3 77,0.3 77,13.6" fill="#8b2d48"/><polygon points="60,13.6 70,3 77,3 77,11" fill="#a0395a" opacity="0.8"/><path d="M52 13.6L63.5 0.3" stroke="#4a3a48" stroke-width="1.2"/><rect x="66" y="12" width="11" height="1.6" fill="#c9803a"/><text x="5" y="5.9" font-size="3.7" font-family="Liberation Sans" font-weight="bold" fill="#e8e8f0">What are the Benefits of</text><text x="5" y="10.4" font-size="3.7" font-family="Liberation Sans" font-weight="bold" fill="#e8e8f0">Managing Brand Compliance?</text><rect x="0" y="13.6" width="39" height="89.4" fill="#e1e4e8"/><rect x="5" y="20.4" width="24" height="0.8" fill="#8d939b"/><rect x="5" y="22.0" width="26.2" height="0.55" fill="#b9bdc3"/><rect x="5" y="23.5" width="28.8" height="0.55" fill="#b9bdc3"/><rect x="5" y="25.4" width="18" height="0.8" fill="#8d939b"/><rect x="5" y="27.0" width="24.1" height="0.55" fill="#b9bdc3"/><rect x="5" y="28.5" width="24.9" height="0.55" fill="#b9bdc3"/><rect x="5" y="30.0" width="25.3" height="0.55" fill="#b9bdc3"/><rect x="5" y="31.5" width="24.5" height="0.55" fill="#b9bdc3"/><rect x="5" y="33.0" width="24.5" height="0.55" fill="#b9bdc3"/><rect x="5" y="34.5" width="25.2" height="0.55" fill="#b9bdc3"/><rect x="5" y="36.4" width="28" height="0.8" fill="#8d939b"/><rect x="5" y="38.0" width="24.4" height="0.55" fill="#b9bdc3"/><rect x="5" y="39.5" width="25.7" height="0.55" fill="#b9bdc3"/><rect x="5" y="41.0" width="29.8" height="0.55" fill="#b9bdc3"/><rect x="5" y="42.5" width="26.6" height="0.55" fill="#b9bdc3"/><rect x="5" y="44.0" width="27.5" height="0.55" fill="#b9bdc3"/><rect x="5" y="45.5" width="25.9" height="0.55" fill="#b9bdc3"/><rect x="5" y="47.0" width="29.8" height="0.55" fill="#b9bdc3"/><rect x="5" y="48.5" width="27.4" height="0.55" fill="#b9bdc3"/><rect x="5" y="50.4" width="18" height="0.8" fill="#8d939b"/><rect x="5" y="52.0" width="27.3" height="0.55" fill="#b9bdc3"/><rect x="5" y="53.5" width="27.9" height="0.55" fill="#b9bdc3"/><rect x="5" y="55.0" width="25.8" height="0.55" fill="#b9bdc3"/><rect x="5" y="56.5" width="24.4" height="0.55" fill="#b9bdc3"/><rect x="5" y="58.0" width="24.7" height="0.55" fill="#b9bdc3"/><rect x="5" y="59.5" width="26.6" height="0.55" fill="#b9bdc3"/><rect x="5" y="61.0" width="27.4" height="0.55" fill="#b9bdc3"/><rect x="41.0" y="20.0" width="1" height="1" fill="#151515"/><rect x="43.5" y="20.0" width="1.4" height="1" fill="#151515"/><rect x="45.9" y="20.0" width="1" height="1" fill="#151515"/><rect x="47.5" y="20.0" width="1.4" height="1" fill="#151515"/><rect x="49.9" y="20.0" width="1.4" height="1" fill="#151515"/><rect x="52.8" y="20.0" width="3.4" height="1" fill="#151515"/><rect x="56.8" y="20.0" width="2.6" height="1" fill="#151515"/><rect x="60.0" y="20.0" width="1.4" height="1" fill="#151515"/><rect x="62.9" y="20.0" width="2.6" height="1" fill="#151515"/><rect x="66.5" y="20.0" width="1.4" height="1" fill="#151515"/><rect x="69.4" y="20.0" width="1.4" height="1" fill="#151515"/><rect x="43.9" y="21.5" width="1" height="1" fill="#151515"/><rect x="46.4" y="21.5" width="3.4" height="1" fill="#151515"/><rect x="51.3" y="21.5" width="0.7" height="1" fill="#151515"/><rect x="53.5" y="21.5" width="1" height="1" fill="#151515"/><rect x="59.6" y="21.5" width="2" height="1" fill="#151515"/><rect x="63.1" y="21.5" width="0.7" height="1" fill="#151515"/><rect x="64.4" y="21.5" width="1" height="1" fill="#151515"/><rect x="66.9" y="21.5" width="2.6" height="1" fill="#151515"/><rect x="72.1" y="21.5" width="2" height="1" fill="#151515"/><rect x="44.2" y="30.0" width="0.7" height="1" fill="#151515"/><rect x="46.4" y="30.0" width="2.6" height="1" fill="#151515"/><rect x="55.7" y="30.0" width="1.4" height="1" fill="#151515"/><rect x="58.1" y="30.0" width="1" height="1" fill="#151515"/><rect x="59.7" y="30.0" width="2" height="1" fill="#151515"/><rect x="41.0" y="32.0" width="2.6" height="1" fill="#151515"/><rect x="44.6" y="32.0" width="1.4" height="1" fill="#151515"/><rect x="57.0" y="32.0" width="2" height="1" fill="#151515"/><rect x="60.5" y="32.0" width="2" height="1" fill="#151515"/><rect x="63.5" y="32.0" width="1" height="1" fill="#151515"/><rect x="70.1" y="32.0" width="3.4" height="1" fill="#151515"/><rect x="43.5" y="34.0" width="3.4" height="1" fill="#151515"/><rect x="50.4" y="34.0" width="1.4" height="1" fill="#151515"/><rect x="53.3" y="34.0" width="3.4" height="1" fill="#151515"/><rect x="67.1" y="34.0" width="2.6" height="1" fill="#151515"/><rect x="72.8" y="34.0" width="3.4" height="1" fill="#151515"/><rect x="53.7" y="38.0" width="2" height="1" fill="#151515"/><rect x="60.7" y="38.0" width="2" height="1" fill="#151515"/><rect x="64.6" y="38.0" width="1.4" height="1" fill="#151515"/><rect x="67.0" y="38.0" width="2" height="1" fill="#151515"/><rect x="70.5" y="38.0" width="2.6" height="1" fill="#151515"/><rect x="44.6" y="40.0" width="1" height="1" fill="#151515"/><rect x="46.2" y="40.0" width="0.7" height="1" fill="#151515"/><rect x="57.1" y="40.0" width="1.4" height="1" fill="#151515"/><rect x="59.5" y="40.0" width="3.4" height="1" fill="#151515"/><rect x="66.6" y="40.0" width="2" height="1" fill="#151515"/><rect x="41.0" y="42.0" width="2.6" height="1" fill="#151515"/><rect x="59.0" y="42.0" width="0.7" height="1" fill="#151515"/><rect x="61.2" y="42.0" width="2.6" height="1" fill="#151515"/><rect x="64.8" y="42.0" width="2.6" height="1" fill="#151515"/><rect x="72.4" y="42.0" width="3.4" height="1" fill="#151515"/><rect x="41.0" y="49.0" width="2.6" height="1" fill="#151515"/><rect x="45.1" y="49.0" width="1" height="1" fill="#151515"/><rect x="47.1" y="49.0" width="1.4" height="1" fill="#151515"/><rect x="50.0" y="49.0" width="0.7" height="1" fill="#151515"/><rect x="52.2" y="49.0" width="0.7" height="1" fill="#151515"/><rect x="54.4" y="49.0" width="3.4" height="1" fill="#151515"/><rect x="59.7" y="49.0" width="1.4" height="1" fill="#151515"/><rect x="62.1" y="49.0" width="1" height="1" fill="#151515"/><rect x="68.2" y="49.0" width="2.6" height="1" fill="#151515"/><rect x="71.4" y="49.0" width="1" height="1" fill="#151515"/><rect x="41.0" y="52.0" width="1.4" height="1" fill="#151515"/><rect x="45.4" y="52.0" width="1.4" height="1" fill="#151515"/><rect x="47.8" y="52.0" width="2" height="1" fill="#151515"/><rect x="55.5" y="52.0" width="3.4" height="1" fill="#151515"/><rect x="59.9" y="52.0" width="0.7" height="1" fill="#151515"/><rect x="70.4" y="52.0" width="0.7" height="1" fill="#151515"/><rect x="71.7" y="52.0" width="1.4" height="1" fill="#151515"/><rect x="56.4" y="54.0" width="2" height="1" fill="#151515"/><rect x="41.0" y="56.0" width="1.4" height="1" fill="#151515"/><rect x="51.9" y="56.0" width="1" height="1" fill="#151515"/><rect x="55.2" y="56.0" width="0.7" height="1" fill="#151515"/><rect x="56.9" y="56.0" width="3.4" height="1" fill="#151515"/><rect x="43.0" y="63.0" width="2" height="1" fill="#151515"/><rect x="46.0" y="63.0" width="1.4" height="1" fill="#151515"/><rect x="50.0" y="63.0" width="1.4" height="1" fill="#151515"/><rect x="52.9" y="63.0" width="2" height="1" fill="#151515"/><rect x="62.2" y="63.0" width="0.7" height="1" fill="#151515"/><rect x="64.4" y="63.0" width="3.4" height="1" fill="#151515"/><rect x="5" y="104" width="1" height="1" fill="#333"/><rect x="9" y="104" width="1" height="1" fill="#333"/></svg>
<div class="a" style="left:568.32px;top:888px;width:127px;height:155px;border-radius:6px;background:#fff;overflow:hidden"><div class="a" style="left:0;top:0;width:127px;height:23px;background:#fff;border-bottom:1px solid #eef0f3"></div><div class="a" style="left:109px;top:0;width:18px;height:22.5px;background:#c8c8c8"></div></div>
<div class="tx" style="left:572.62px;top:894.74px;font-size:10px;color:#111;">Page 5</div>
<div class="tx" style="left:683.82px;top:894.74px;font-size:10px;color:#fff;">0</div>
<svg style="left:593.82px;top:923px" width="77" height="106"><rect x="0" y="0" width="77" height="13.6" fill="#1b1a3c"/><polygon points="53,13.6 64.5,0.3 77,0.3 77,13.6" fill="#8b2d48"/><polygon points="60,13.6 70,3 77,3 77,11" fill="#a0395a" opacity="0.8"/><path d="M52 13.6L63.5 0.3" stroke="#4a3a48" stroke-width="1.2"/><rect x="66" y="12" width="11" height="1.6" fill="#c9803a"/><text x="5" y="5.9" font-size="3.7" font-family="Liberation Sans" font-weight="bold" fill="#e8e8f0">What are the Benefits of</text><text x="5" y="10.4" font-size="3.7" font-family="Liberation Sans" font-weight="bold" fill="#e8e8f0">Managing Brand Compliance?</text><rect x="0" y="13.6" width="77" height="45" fill="#e0e3e7"/><rect x="5" y="21.0" width="25.7" height="0.55" fill="#b9bdc3"/><rect x="5" y="22.5" width="25.3" height="0.55" fill="#b9bdc3"/><rect x="5" y="24.0" width="28.0" height="0.55" fill="#b9bdc3"/><rect x="5" y="25.5" width="28.6" height="0.55" fill="#b9bdc3"/><rect x="5" y="27.0" width="29.1" height="0.55" fill="#b9bdc3"/><rect x="5" y="30.0" width="25.9" height="0.55" fill="#b9bdc3"/><rect x="5" y="31.5" width="28.3" height="0.55" fill="#b9bdc3"/><rect x="5" y="33.0" width="30.8" height="0.55" fill="#b9bdc3"/><rect x="5" y="34.5" width="26.4" height="0.55" fill="#b9bdc3"/><rect x="5" y="36.0" width="29.9" height="0.55" fill="#b9bdc3"/><rect x="5" y="37.5" width="30.8" height="0.55" fill="#b9bdc3"/><rect x="5" y="40.5" width="29.0" height="0.55" fill="#b9bdc3"/><rect x="5" y="42.0" width="27.5" height="0.55" fill="#b9bdc3"/><rect x="5" y="43.5" width="27.4" height="0.55" fill="#b9bdc3"/><rect x="5" y="45.0" width="27.7" height="0.55" fill="#b9bdc3"/><rect x="5" y="46.5" width="25.6" height="0.55" fill="#b9bdc3"/><rect x="5" y="48.0" width="25.3" height="0.55" fill="#b9bdc3"/><rect x="5" y="49.5" width="26.5" height="0.55" fill="#b9bdc3"/><rect x="5" y="51.0" width="25.9" height="0.55" fill="#b9bdc3"/><rect x="5" y="52.5" width="30.4" height="0.55" fill="#b9bdc3"/><rect x="40" y="21.0" width="27.9" height="0.55" fill="#b9bdc3"/><rect x="40" y="22.5" width="31.2" height="0.55" fill="#b9bdc3"/><rect x="40" y="24.0" width="29.2" height="0.55" fill="#b9bdc3"/><rect x="40" y="25.5" width="31.3" height="0.55" fill="#b9bdc3"/><rect x="40" y="28.5" width="31.3" height="0.55" fill="#b9bdc3"/><rect x="40" y="30.0" width="30.2" height="0.55" fill="#b9bdc3"/><rect x="40" y="31.5" width="28.5" height="0.55" fill="#b9bdc3"/><rect x="40" y="33.0" width="27.2" height="0.55" fill="#b9bdc3"/><rect x="40" y="36.0" width="29.2" height="0.55" fill="#b9bdc3"/><rect x="40" y="37.5" width="27.6" height="0.55" fill="#b9bdc3"/><rect x="40" y="39.0" width="30.9" height="0.55" fill="#b9bdc3"/><rect x="40" y="40.5" width="25.9" height="0.55" fill="#b9bdc3"/><rect x="40" y="42.0" width="29.7" height="0.55" fill="#b9bdc3"/><rect x="40" y="43.5" width="27.8" height="0.55" fill="#b9bdc3"/><g fill="#f6f7f9" stroke="#b8bcc4" stroke-width="0.35"><ellipse cx="13" cy="73" rx="7" ry="6" transform="rotate(-40 13 73)"/><ellipse cx="46" cy="71" rx="7" ry="6" transform="rotate(-40 46 71)"/><ellipse cx="25" cy="91" rx="6" ry="5" transform="rotate(-40 25 91)"/></g><polygon points="23,71 43,61 45,62 45,79 25,89 23,88" fill="#3b5fc8"/><polygon points="25,72 43,63 43,78 25,87" fill="#6fe0d0"/><polygon points="27,75 31,73 31,82 27,84" fill="#c9ccd2"/><polygon points="38,69 42,67 42,76 38,78" fill="#c9ccd2"/><polygon points="33,72 36,70 36,80 33,82" fill="#5fb0a0"/><polygon points="26,88 42,80 47,83 31,91" fill="#2a2a3a"/><rect x="9.5" y="80" width="5" height="10" fill="#5fd68f"/><rect x="50" y="75" width="4.5" height="8" fill="#5fd68f"/><g fill="#d0d3d9"><polygon points="36,86 41,83 41,93 36,96"/><polygon points="41,90 46,87 46,97 41,100"/><polygon points="46,83 51,80 51,90 46,93"/></g><g fill="#e8a94e"><rect x="40" y="94" width="1.5" height="3"/><rect x="45" y="98" width="1.5" height="3"/><rect x="50" y="89" width="1.5" height="3"/></g><rect x="5" y="104" width="1" height="1" fill="#333"/><rect x="9" y="104" width="1" height="1" fill="#333"/></svg>
<div class="a" style="left:705.15px;top:888px;width:127px;height:155px;border-radius:6px;background:#fff;overflow:hidden"><div class="a" style="left:0;top:0;width:127px;height:23px;background:#fff;border-bottom:1px solid #eef0f3"></div><div class="a" style="left:109px;top:0;width:18px;height:22.5px;background:#c8c8c8"></div></div>
<div class="tx" style="left:709.45px;top:894.74px;font-size:10px;color:#111;">Page 6</div>
<div class="tx" style="left:820.65px;top:894.74px;font-size:10px;color:#fff;">0</div>
<svg style="left:730.65px;top:923px" width="77" height="106"><rect x="0" y="0" width="77" height="13.6" fill="#1b1a3c"/><polygon points="53,13.6 64.5,0.3 77,0.3 77,13.6" fill="#8b2d48"/><polygon points="60,13.6 70,3 77,3 77,11" fill="#a0395a" opacity="0.8"/><path d="M52 13.6L63.5 0.3" stroke="#4a3a48" stroke-width="1.2"/><rect x="66" y="12" width="11" height="1.6" fill="#c9803a"/><text x="5" y="5.9" font-size="3.7" font-family="Liberation Sans" font-weight="bold" fill="#e8e8f0">Common Challenges</text><text x="5" y="10.4" font-size="3.7" font-family="Liberation Sans" font-weight="bold" fill="#e8e8f0">with Brand Compliance</text><rect x="0" y="13.6" width="39" height="89.4" fill="#e1e4e8"/><rect x="5" y="20.4" width="24" height="0.8" fill="#8d939b"/><rect x="5" y="22.0" width="27.6" height="0.55" fill="#b9bdc3"/><rect x="5" y="23.5" width="24.6" height="0.55" fill="#b9bdc3"/><rect x="5" y="25.0" width="29.2" height="0.55" fill="#b9bdc3"/><rect x="5" y="26.5" width="28.2" height="0.55" fill="#b9bdc3"/><rect x="5" y="28.0" width="29.5" height="0.55" fill="#b9bdc3"/><rect x="5" y="29.5" width="27.5" height="0.55" fill="#b9bdc3"/><rect x="5" y="30.4" width="28" height="0.8" fill="#8d939b"/><rect x="5" y="32.0" width="28.0" height="0.55" fill="#b9bdc3"/><rect x="5" y="33.5" width="28.3" height="0.55" fill="#b9bdc3"/><rect x="5" y="35.0" width="28.8" height="0.55" fill="#b9bdc3"/><rect x="5" y="36.5" width="25.4" height="0.55" fill="#b9bdc3"/><rect x="5" y="38.0" width="27.0" height="0.55" fill="#b9bdc3"/><rect x="5" y="39.5" width="24.0" height="0.55" fill="#b9bdc3"/><rect x="5" y="40.4" width="24" height="0.8" fill="#8d939b"/><rect x="5" y="42.0" width="27.4" height="0.55" fill="#b9bdc3"/><rect x="5" y="43.5" width="29.5" height="0.55" fill="#b9bdc3"/><rect x="5" y="45.0" width="28.0" height="0.55" fill="#b9bdc3"/><rect x="5" y="46.5" width="26.0" height="0.55" fill="#b9bdc3"/><rect x="5" y="48.0" width="26.6" height="0.55" fill="#b9bdc3"/><rect x="5" y="49.5" width="25.8" height="0.55" fill="#b9bdc3"/><rect x="5" y="51.0" width="24.0" height="0.55" fill="#b9bdc3"/><rect x="5" y="53.4" width="28" height="0.8" fill="#8d939b"/><rect x="5" y="55.0" width="28.0" height="0.55" fill="#b9bdc3"/><rect x="5" y="56.5" width="26.4" height="0.55" fill="#b9bdc3"/><rect x="5" y="58.0" width="24.3" height="0.55" fill="#b9bdc3"/><rect x="5" y="59.5" width="24.6" height="0.55" fill="#b9bdc3"/><rect x="5" y="61.0" width="27.9" height="0.55" fill="#b9bdc3"/><rect x="5" y="62.5" width="28.9" height="0.55" fill="#b9bdc3"/><rect x="5" y="64.4" width="28" height="0.8" fill="#8d939b"/><rect x="5" y="66.0" width="28.5" height="0.55" fill="#b9bdc3"/><rect x="5" y="67.5" width="24.4" height="0.55" fill="#b9bdc3"/><rect x="5" y="69.0" width="29.9" height="0.55" fill="#b9bdc3"/><rect x="5" y="70.5" width="25.7" height="0.55" fill="#b9bdc3"/><rect x="5" y="72.0" width="27.6" height="0.55" fill="#b9bdc3"/><rect x="5" y="73.5" width="29.1" height="0.55" fill="#b9bdc3"/><rect x="5" y="75.0" width="29.6" height="0.55" fill="#b9bdc3"/><rect x="41.0" y="21.0" width="1.4" height="1" fill="#151515"/><rect x="43.0" y="21.0" width="2.6" height="1" fill="#151515"/><rect x="46.6" y="21.0" width="2.6" height="1" fill="#151515"/><rect x="57.7" y="21.0" width="2.6" height="1" fill="#151515"/><rect x="61.3" y="21.0" width="0.7" height="1" fill="#151515"/><rect x="62.6" y="21.0" width="3.4" height="1" fill="#151515"/><rect x="70.7" y="21.0" width="0.7" height="1" fill="#151515"/><rect x="72.0" y="21.0" width="1" height="1" fill="#151515"/><rect x="44.5" y="23.0" width="1.4" height="1" fill="#151515"/><rect x="56.3" y="23.0" width="3.4" height="1" fill="#151515"/><rect x="47.4" y="28.0" width="2.6" height="1" fill="#151515"/><rect x="58.1" y="28.0" width="2.6" height="1" fill="#151515"/><rect x="46.6" y="30.0" width="1.4" height="1" fill="#151515"/><rect x="49.5" y="30.0" width="1.4" height="1" fill="#151515"/><rect x="52.4" y="30.0" width="1.4" height="1" fill="#151515"/><rect x="56.6" y="30.0" width="1" height="1" fill="#151515"/><rect x="65.1" y="30.0" width="2" height="1" fill="#151515"/><rect x="67.7" y="30.0" width="1.4" height="1" fill="#151515"/><rect x="43.0" y="35.0" width="1.4" height="1" fill="#151515"/><rect x="45.0" y="35.0" width="2" height="1" fill="#151515"/><rect x="55.0" y="35.0" width="3.4" height="1" fill="#151515"/><rect x="51.2" y="37.0" width="1" height="1" fill="#151515"/><rect x="63.7" y="37.0" width="1.4" height="1" fill="#151515"/><rect x="66.1" y="37.0" width="1.4" height="1" fill="#151515"/><rect x="41.0" y="40.0" width="2.6" height="1" fill="#151515"/><rect x="60.9" y="40.0" width="2" height="1" fill="#151515"/><rect x="63.5" y="40.0" width="1" height="1" fill="#151515"/><rect x="65.1" y="40.0" width="1.4" height="1" fill="#151515"/><rect x="67.5" y="40.0" width="2.6" height="1" fill="#151515"/><rect x="72.8" y="40.0" width="2.6" height="1" fill="#151515"/><rect x="55.4" y="43.0" width="1.4" height="1" fill="#151515"/><rect x="58.3" y="43.0" width="2.6" height="1" fill="#151515"/><rect x="44.0" y="45.0" width="0.7" height="1" fill="#151515"/><rect x="45.3" y="45.0" width="2.6" height="1" fill="#151515"/><rect x="61.8" y="45.0" width="0.7" height="1" fill="#151515"/><rect x="70.0" y="45.0" width="1" height="1" fill="#151515"/><rect x="72.5" y="45.0" width="1" height="1" fill="#151515"/><rect x="47.5" y="50.0" width="1" height="1" fill="#151515"/><rect x="49.5" y="50.0" width="0.7" height="1" fill="#151515"/><rect x="51.7" y="50.0" width="1" height="1" fill="#151515"/><rect x="56.3" y="50.0" width="1.4" height="1" fill="#151515"/><rect x="58.3" y="50.0" width="2" height="1" fill="#151515"/><rect x="61.8" y="50.0" width="1.4" height="1" fill="#151515"/><rect x="66.7" y="50.0" width="3.4" height="1" fill="#151515"/><rect x="41.0" y="52.0" width="2.6" height="1" fill="#151515"/><rect x="44.2" y="52.0" width="1" height="1" fill="#151515"/><rect x="48.4" y="52.0" width="2.6" height="1" fill="#151515"/><rect x="62.6" y="52.0" width="0.7" height="1" fill="#151515"/><rect x="66.7" y="52.0" width="0.7" height="1" fill="#151515"/><rect x="70.9" y="52.0" width="2" height="1" fill="#151515"/><rect x="44.3" y="57.0" width="1.4" height="1" fill="#151515"/><rect x="50.7" y="57.0" width="3.4" height="1" fill="#151515"/><rect x="70.8" y="57.0" width="2" height="1" fill="#151515"/><rect x="70.5" y="60.0" width="3.4" height="1" fill="#151515"/><rect x="41.0" y="62.0" width="2" height="1" fill="#151515"/><rect x="53.0" y="62.0" width="1" height="1" fill="#151515"/><rect x="58.5" y="62.0" width="2" height="1" fill="#151515"/><rect x="61.5" y="62.0" width="1.4" height="1" fill="#151515"/><rect x="5" y="104" width="1" height="1" fill="#333"/><rect x="9" y="104" width="1" height="1" fill="#333"/></svg>
<div class="a" style="left:841.98px;top:888px;width:127px;height:155px;border-radius:6px;background:#fff;overflow:hidden"><div class="a" style="left:0;top:0;width:127px;height:23px;background:#fff;border-bottom:1px solid #eef0f3"></div><div class="a" style="left:109px;top:0;width:18px;height:22.5px;background:#c8c8c8"></div></div>
<div class="tx" style="left:846.28px;top:894.74px;font-size:10px;color:#111;">Page 7</div>
<div class="tx" style="left:957.48px;top:894.74px;font-size:10px;color:#fff;">0</div>
<svg style="left:867.48px;top:923px" width="77" height="106"><rect x="0" y="0" width="77" height="13.6" fill="#1b1a3c"/><polygon points="53,13.6 64.5,0.3 77,0.3 77,13.6" fill="#8b2d48"/><polygon points="60,13.6 70,3 77,3 77,11" fill="#a0395a" opacity="0.8"/><path d="M52 13.6L63.5 0.3" stroke="#4a3a48" stroke-width="1.2"/><rect x="66" y="12" width="11" height="1.6" fill="#c9803a"/><text x="5" y="5.9" font-size="3.7" font-family="Liberation Sans" font-weight="bold" fill="#e8e8f0">Ways to Ensure Brand</text><text x="5" y="10.4" font-size="3.7" font-family="Liberation Sans" font-weight="bold" fill="#e8e8f0">Consistency and Compliance</text><rect x="0" y="13.6" width="39" height="89.4" fill="#e1e4e8"/><rect x="5" y="20.4" width="24" height="0.8" fill="#8d939b"/><rect x="5" y="22.0" width="27.6" height="0.55" fill="#b9bdc3"/><rect x="5" y="23.5" width="28.2" height="0.55" fill="#b9bdc3"/><rect x="5" y="25.0" width="24.1" height="0.55" fill="#b9bdc3"/><rect x="5" y="26.5" width="25.7" height="0.55" fill="#b9bdc3"/><rect x="5" y="28.0" width="24.5" height="0.55" fill="#b9bdc3"/><rect x="5" y="29.5" width="25.2" height="0.55" fill="#b9bdc3"/><rect x="5" y="30.4" width="18" height="0.8" fill="#8d939b"/><rect x="5" y="32.0" width="24.8" height="0.55" fill="#b9bdc3"/><rect x="5" y="33.5" width="30.0" height="0.55" fill="#b9bdc3"/><rect x="5" y="35.0" width="25.3" height="0.55" fill="#b9bdc3"/><rect x="5" y="36.5" width="26.7" height="0.55" fill="#b9bdc3"/><rect x="5" y="38.0" width="27.6" height="0.55" fill="#b9bdc3"/><rect x="5" y="39.5" width="28.0" height="0.55" fill="#b9bdc3"/><rect x="5" y="41.0" width="24.8" height="0.55" fill="#b9bdc3"/><rect x="5" y="42.4" width="28" height="0.8" fill="#8d939b"/><rect x="5" y="44.0" width="26.2" height="0.55" fill="#b9bdc3"/><rect x="5" y="45.5" width="24.5" height="0.55" fill="#b9bdc3"/><rect x="5" y="47.0" width="26.6" height="0.55" fill="#b9bdc3"/><rect x="5" y="48.5" width="27.7" height="0.55" fill="#b9bdc3"/><rect x="5" y="50.0" width="26.2" height="0.55" fill="#b9bdc3"/><rect x="5" y="51.5" width="28.4" height="0.55" fill="#b9bdc3"/><rect x="5" y="53.0" width="25.9" height="0.55" fill="#b9bdc3"/><rect x="5" y="54.5" width="28.9" height="0.55" fill="#b9bdc3"/><rect x="5" y="56.4" width="18" height="0.8" fill="#8d939b"/><rect x="5" y="58.0" width="29.6" height="0.55" fill="#b9bdc3"/><rect x="5" y="59.5" width="26.4" height="0.55" fill="#b9bdc3"/><rect x="5" y="61.0" width="29.8" height="0.55" fill="#b9bdc3"/><rect x="5" y="62.5" width="29.9" height="0.55" fill="#b9bdc3"/><rect x="5" y="64.0" width="24.6" height="0.55" fill="#b9bdc3"/><rect x="5" y="65.5" width="26.3" height="0.55" fill="#b9bdc3"/><rect x="5" y="66.4" width="18" height="0.8" fill="#8d939b"/><rect x="5" y="68.0" width="25.0" height="0.55" fill="#b9bdc3"/><rect x="5" y="69.5" width="26.5" height="0.55" fill="#b9bdc3"/><rect x="5" y="71.0" width="30.0" height="0.55" fill="#b9bdc3"/><rect x="5" y="72.5" width="26.3" height="0.55" fill="#b9bdc3"/><rect x="5" y="74.0" width="29.8" height="0.55" fill="#b9bdc3"/><rect x="5" y="75.5" width="28.0" height="0.55" fill="#b9bdc3"/><rect x="5" y="77.0" width="27.9" height="0.55" fill="#b9bdc3"/><rect x="41.0" y="21.0" width="1" height="1" fill="#151515"/><rect x="43.5" y="21.0" width="1" height="1" fill="#151515"/><rect x="45.1" y="21.0" width="3.4" height="1" fill="#151515"/><rect x="49.1" y="21.0" width="0.7" height="1" fill="#151515"/><rect x="50.8" y="21.0" width="0.7" height="1" fill="#151515"/><rect x="52.5" y="21.0" width="2" height="1" fill="#151515"/><rect x="56.0" y="21.0" width="2" height="1" fill="#151515"/><rect x="59.0" y="21.0" width="3.4" height="1" fill="#151515"/><rect x="63.4" y="21.0" width="0.7" height="1" fill="#151515"/><rect x="65.6" y="21.0" width="1" height="1" fill="#151515"/><rect x="69.3" y="21.0" width="2.6" height="1" fill="#151515"/><rect x="72.5" y="21.0" width="3.4" height="1" fill="#151515"/><rect x="52.5" y="29.0" width="1.4" height="1" fill="#151515"/><rect x="55.8" y="29.0" width="2.6" height="1" fill="#151515"/><rect x="59.0" y="29.0" width="0.7" height="1" fill="#151515"/><rect x="61.2" y="29.0" width="0.7" height="1" fill="#151515"/><rect x="66.6" y="29.0" width="2.6" height="1" fill="#151515"/><rect x="48.1" y="31.0" width="1.4" height="1" fill="#151515"/><rect x="51.0" y="31.0" width="3.4" height="1" fill="#151515"/><rect x="63.7" y="31.0" width="3.4" height="1" fill="#151515"/><rect x="68.1" y="31.0" width="3.4" height="1" fill="#151515"/><rect x="48.0" y="35.0" width="3.4" height="1" fill="#151515"/><rect x="52.0" y="35.0" width="2" height="1" fill="#151515"/><rect x="55.0" y="35.0" width="1.4" height="1" fill="#151515"/><rect x="57.9" y="35.0" width="2" height="1" fill="#151515"/><rect x="60.5" y="35.0" width="2.6" height="1" fill="#151515"/><rect x="64.1" y="35.0" width="0.7" height="1" fill="#151515"/><rect x="70.2" y="35.0" width="3.4" height="1" fill="#151515"/><rect x="44.0" y="37.0" width="1.4" height="1" fill="#151515"/><rect x="48.6" y="37.0" width="2" height="1" fill="#151515"/><rect x="53.8" y="37.0" width="3.4" height="1" fill="#151515"/><rect x="58.7" y="37.0" width="1" height="1" fill="#151515"/><rect x="66.9" y="37.0" width="2.6" height="1" fill="#151515"/><rect x="72.1" y="37.0" width="1" height="1" fill="#151515"/><rect x="41.0" y="39.0" width="1.4" height="1" fill="#151515"/><rect x="43.9" y="39.0" width="2" height="1" fill="#151515"/><rect x="49.4" y="39.0" width="0.7" height="1" fill="#151515"/><rect x="51.1" y="39.0" width="1" height="1" fill="#151515"/><rect x="55.7" y="39.0" width="0.7" height="1" fill="#151515"/><rect x="63.2" y="39.0" width="2.6" height="1" fill="#151515"/><rect x="66.4" y="39.0" width="3.4" height="1" fill="#151515"/><rect x="72.1" y="39.0" width="1.4" height="1" fill="#151515"/><rect x="41.0" y="45.0" width="1" height="1" fill="#151515"/><rect x="46.5" y="45.0" width="1.4" height="1" fill="#151515"/><rect x="48.9" y="45.0" width="3.4" height="1" fill="#151515"/><rect x="53.3" y="45.0" width="2.6" height="1" fill="#151515"/><rect x="63.5" y="45.0" width="0.7" height="1" fill="#151515"/><rect x="64.8" y="45.0" width="2" height="1" fill="#151515"/><rect x="70.3" y="45.0" width="3.4" height="1" fill="#151515"/><rect x="54.0" y="47.0" width="2" height="1" fill="#151515"/><rect x="62.7" y="47.0" width="2.6" height="1" fill="#151515"/><rect x="41" y="74" width="31" height="22" fill="#eef1f4"/><rect x="43" y="76.0" width="24.9" height="0.55" fill="#a0a6ae"/><rect x="43" y="77.4" width="24.6" height="0.55" fill="#a0a6ae"/><rect x="43" y="78.8" width="22.5" height="0.55" fill="#a0a6ae"/><rect x="43" y="80.2" width="23.8" height="0.55" fill="#a0a6ae"/><rect x="43" y="81.6" width="25.1" height="0.55" fill="#a0a6ae"/><rect x="43" y="88" width="8" height="1.2" fill="#555"/><rect x="60" y="87" width="10" height="3" fill="#9ac4e6"/><rect x="5" y="104" width="1" height="1" fill="#333"/><rect x="9" y="104" width="1" height="1" fill="#333"/></svg>
<div class="a" style="left:978.81px;top:888px;width:127px;height:155px;border-radius:6px;background:#fff;overflow:hidden"><div class="a" style="left:0;top:0;width:127px;height:23px;background:#fff;border-bottom:1px solid #eef0f3"></div><div class="a" style="left:109px;top:0;width:18px;height:22.5px;background:#c8c8c8"></div></div>
<div class="tx" style="left:983.11px;top:894.74px;font-size:10px;color:#111;">Page 8</div>
<div class="tx" style="left:1094.31px;top:894.74px;font-size:10px;color:#fff;">0</div>
<svg style="left:1004.31px;top:923px" width="77" height="106"><rect x="0" y="0" width="77" height="13.6" fill="#1b1a3c"/><polygon points="53,13.6 64.5,0.3 77,0.3 77,13.6" fill="#8b2d48"/><polygon points="60,13.6 70,3 77,3 77,11" fill="#a0395a" opacity="0.8"/><path d="M52 13.6L63.5 0.3" stroke="#4a3a48" stroke-width="1.2"/><rect x="66" y="12" width="11" height="1.6" fill="#c9803a"/><text x="5" y="5.9" font-size="3.7" font-family="Liberation Sans" font-weight="bold" fill="#e8e8f0">How Simple Solutions can</text><text x="5" y="10.4" font-size="3.7" font-family="Liberation Sans" font-weight="bold" fill="#e8e8f0">Help Manage Your Brand</text><rect x="0" y="13.6" width="39" height="89.4" fill="#e1e4e8"/><rect x="5" y="20.4" width="18" height="0.8" fill="#8d939b"/><rect x="5" y="22.0" width="28.5" height="0.55" fill="#b9bdc3"/><rect x="5" y="23.5" width="27.9" height="0.55" fill="#b9bdc3"/><rect x="5" y="25.0" width="28.8" height="0.55" fill="#b9bdc3"/><rect x="5" y="26.5" width="27.8" height="0.55" fill="#b9bdc3"/><rect x="5" y="28.0" width="29.3" height="0.55" fill="#b9bdc3"/><rect x="5" y="29.5" width="24.8" height="0.55" fill="#b9bdc3"/><rect x="5" y="31.0" width="28.8" height="0.55" fill="#b9bdc3"/><rect x="5" y="32.4" width="28" height="0.8" fill="#8d939b"/><rect x="5" y="34.0" width="24.1" height="0.55" fill="#b9bdc3"/><rect x="5" y="35.5" width="27.5" height="0.55" fill="#b9bdc3"/><rect x="5" y="37.0" width="28.2" height="0.55" fill="#b9bdc3"/><rect x="5" y="38.5" width="28.9" height="0.55" fill="#b9bdc3"/><rect x="5" y="40.0" width="28.3" height="0.55" fill="#b9bdc3"/><rect x="5" y="41.5" width="27.6" height="0.55" fill="#b9bdc3"/><rect x="5" y="43.0" width="26.2" height="0.55" fill="#b9bdc3"/><rect x="5" y="44.5" width="29.6" height="0.55" fill="#b9bdc3"/><rect x="5" y="46.0" width="25.6" height="0.55" fill="#b9bdc3"/><rect x="5" y="47.5" width="26.7" height="0.55" fill="#b9bdc3"/><rect x="5" y="48.4" width="18" height="0.8" fill="#8d939b"/><rect x="5" y="50.0" width="28.1" height="0.55" fill="#b9bdc3"/><rect x="5" y="51.5" width="26.5" height="0.55" fill="#b9bdc3"/><rect x="5" y="53.0" width="28.6" height="0.55" fill="#b9bdc3"/><rect x="5" y="54.5" width="28.1" height="0.55" fill="#b9bdc3"/><rect x="5" y="56.0" width="28.8" height="0.55" fill="#b9bdc3"/><rect x="5" y="57.5" width="25.5" height="0.55" fill="#b9bdc3"/><rect x="5" y="59.0" width="26.9" height="0.55" fill="#b9bdc3"/><rect x="5" y="60.4" width="24" height="0.8" fill="#8d939b"/><rect x="5" y="62.0" width="28.6" height="0.55" fill="#b9bdc3"/><rect x="5" y="63.5" width="27.7" height="0.55" fill="#b9bdc3"/><rect x="5" y="65.0" width="29.2" height="0.55" fill="#b9bdc3"/><rect x="5" y="66.5" width="28.0" height="0.55" fill="#b9bdc3"/><rect x="5" y="68.0" width="28.6" height="0.55" fill="#b9bdc3"/><rect x="5" y="69.5" width="25.7" height="0.55" fill="#b9bdc3"/><rect x="5" y="71.0" width="29.6" height="0.55" fill="#b9bdc3"/><rect x="5" y="72.5" width="27.5" height="0.55" fill="#b9bdc3"/><rect x="5" y="74.0" width="27.3" height="0.55" fill="#b9bdc3"/><rect x="5" y="75.5" width="26.3" height="0.55" fill="#b9bdc3"/><rect x="5" y="77.0" width="29.1" height="0.55" fill="#b9bdc3"/><rect x="5" y="78.5" width="27.8" height="0.55" fill="#b9bdc3"/><rect x="5" y="80.0" width="27.3" height="0.55" fill="#b9bdc3"/><rect x="5" y="81.5" width="27.7" height="0.55" fill="#b9bdc3"/><rect x="44.3" y="20.0" width="0.7" height="1" fill="#151515"/><rect x="50.9" y="20.0" width="3.4" height="1" fill="#151515"/><rect x="55.8" y="20.0" width="2" height="1" fill="#151515"/><rect x="58.8" y="20.0" width="1.4" height="1" fill="#151515"/><rect x="60.8" y="20.0" width="2" height="1" fill="#151515"/><rect x="66.0" y="20.0" width="0.7" height="1" fill="#151515"/><rect x="67.3" y="20.0" width="1.4" height="1" fill="#151515"/><rect x="69.7" y="20.0" width="0.7" height="1" fill="#151515"/><rect x="71.9" y="20.0" width="1" height="1" fill="#151515"/><rect x="43.6" y="22.0" width="2.6" height="1" fill="#151515"/><rect x="50.9" y="22.0" width="2.6" height="1" fill="#151515"/><rect x="59.4" y="22.0" width="1.4" height="1" fill="#151515"/><rect x="61.4" y="22.0" width="2.6" height="1" fill="#151515"/><rect x="70.2" y="22.0" width="1.4" height="1" fill="#151515"/><rect x="72.6" y="22.0" width="1.4" height="1" fill="#151515"/><rect x="43.5" y="27.0" width="1.4" height="1" fill="#151515"/><rect x="54.1" y="27.0" width="2.6" height="1" fill="#151515"/><rect x="58.2" y="27.0" width="2" height="1" fill="#151515"/><rect x="61.2" y="27.0" width="0.7" height="1" fill="#151515"/><rect x="41.0" y="29.0" width="3.4" height="1" fill="#151515"/><rect x="45.4" y="29.0" width="1.4" height="1" fill="#151515"/><rect x="71.9" y="29.0" width="2.6" height="1" fill="#151515"/><rect x="47.7" y="34.0" width="0.7" height="1" fill="#151515"/><rect x="61.6" y="34.0" width="1" height="1" fill="#151515"/><rect x="64.1" y="34.0" width="3.4" height="1" fill="#151515"/><rect x="68.5" y="34.0" width="1.4" height="1" fill="#151515"/><rect x="51.5" y="36.0" width="2" height="1" fill="#151515"/><rect x="54.5" y="36.0" width="2" height="1" fill="#151515"/><rect x="61.9" y="36.0" width="2.6" height="1" fill="#151515"/><rect x="41.0" y="40.0" width="2.6" height="1" fill="#151515"/><rect x="44.6" y="40.0" width="1.4" height="1" fill="#151515"/><rect x="47.5" y="40.0" width="2" height="1" fill="#151515"/><rect x="51.8" y="40.0" width="2.6" height="1" fill="#151515"/><rect x="63.0" y="40.0" width="2" height="1" fill="#151515"/><rect x="66.0" y="40.0" width="0.7" height="1" fill="#151515"/><rect x="68.2" y="40.0" width="2" height="1" fill="#151515"/><rect x="44.0" y="42.0" width="2" height="1" fill="#151515"/><rect x="47.5" y="42.0" width="2" height="1" fill="#151515"/><rect x="53.7" y="42.0" width="2" height="1" fill="#151515"/><rect x="69.9" y="42.0" width="2" height="1" fill="#151515"/><rect x="41.0" y="48.0" width="2.6" height="1" fill="#151515"/><rect x="44.2" y="48.0" width="2" height="1" fill="#151515"/><rect x="51.8" y="48.0" width="0.7" height="1" fill="#151515"/><rect x="66.5" y="48.0" width="2" height="1" fill="#151515"/><rect x="71.6" y="48.0" width="2.6" height="1" fill="#151515"/><rect x="54.5" y="50.0" width="1.4" height="1" fill="#151515"/><rect x="63.1" y="50.0" width="2.6" height="1" fill="#151515"/><rect x="41.0" y="53.0" width="0.7" height="1" fill="#151515"/><rect x="45.3" y="53.0" width="3.4" height="1" fill="#151515"/><rect x="50.2" y="53.0" width="2" height="1" fill="#151515"/><rect x="56.9" y="53.0" width="1" height="1" fill="#151515"/><rect x="59.4" y="53.0" width="1" height="1" fill="#151515"/><rect x="63.4" y="53.0" width="0.7" height="1" fill="#151515"/><rect x="71.3" y="53.0" width="0.7" height="1" fill="#151515"/><rect x="41.0" y="55.0" width="2" height="1" fill="#151515"/><rect x="47.5" y="55.0" width="3.4" height="1" fill="#151515"/><rect x="61.6" y="55.0" width="2.6" height="1" fill="#151515"/><rect x="68.2" y="55.0" width="3.4" height="1" fill="#151515"/><rect x="41.0" y="57.0" width="1" height="1" fill="#151515"/><rect x="58.5" y="57.0" width="2" height="1" fill="#151515"/><rect x="66.1" y="57.0" width="3.4" height="1" fill="#151515"/><rect x="71.0" y="57.0" width="1" height="1" fill="#151515"/><rect x="41.0" y="64.0" width="2" height="1" fill="#151515"/><rect x="44.5" y="64.0" width="2" height="1" fill="#151515"/><rect x="52.4" y="64.0" width="1" height="1" fill="#151515"/><rect x="54.9" y="64.0" width="3.4" height="1" fill="#151515"/><rect x="63.3" y="64.0" width="2.6" height="1" fill="#151515"/><rect x="70.6" y="64.0" width="0.7" height="1" fill="#151515"/><rect x="71.9" y="64.0" width="2.6" height="1" fill="#151515"/><rect x="52.6" y="66.0" width="0.7" height="1" fill="#151515"/><rect x="54.8" y="66.0" width="1" height="1" fill="#151515"/><rect x="56.4" y="66.0" width="1.4" height="1" fill="#151515"/><rect x="59.3" y="66.0" width="2" height="1" fill="#151515"/><rect x="62.3" y="66.0" width="1" height="1" fill="#151515"/><rect x="64.8" y="66.0" width="0.7" height="1" fill="#151515"/><rect x="66.5" y="66.0" width="0.7" height="1" fill="#151515"/><rect x="72.2" y="66.0" width="3.4" height="1" fill="#151515"/><rect x="47.6" y="70.0" width="1.4" height="1" fill="#151515"/><rect x="62.2" y="70.0" width="2.6" height="1" fill="#151515"/><rect x="41.0" y="72.0" width="0.7" height="1" fill="#151515"/><rect x="41.0" y="78.0" width="3.4" height="1" fill="#151515"/><rect x="45.0" y="78.0" width="3.4" height="1" fill="#151515"/><rect x="54.3" y="78.0" width="1" height="1" fill="#151515"/><rect x="53.6" y="80.0" width="2.6" height="1" fill="#151515"/><rect x="43.9" y="87.0" width="1.4" height="1" fill="#151515"/><rect x="46.8" y="87.0" width="3.4" height="1" fill="#151515"/><rect x="54.2" y="87.0" width="3.4" height="1" fill="#151515"/><rect x="5" y="104" width="1" height="1" fill="#333"/><rect x="9" y="104" width="1" height="1" fill="#333"/></svg>
<div class="a" style="left:1115.64px;top:888px;width:127px;height:155px;border-radius:6px;background:#fff;overflow:hidden"><div class="a" style="left:0;top:0;width:127px;height:23px;background:#fff;border-bottom:1px solid #eef0f3"></div><div class="a" style="left:109px;top:0;width:18px;height:22.5px;background:#c8c8c8"></div></div>
<div class="tx" style="left:1119.94px;top:894.74px;font-size:10px;color:#111;">Page 9</div>
<div class="tx" style="left:1231.14px;top:894.74px;font-size:10px;color:#fff;">0</div>
<svg style="left:1141.14px;top:923px" width="77" height="106"><rect x="0" y="0" width="77" height="13.6" fill="#1b1a3c"/><text x="5" y="5.9" font-size="3.7" font-family="Liberation Sans" font-weight="bold" fill="#e8e8f0">How Simple Solutions can</text><text x="5" y="10.4" font-size="3.7" font-family="Liberation Sans" font-weight="bold" fill="#e8e8f0">Help Manage Your Brand</text><rect x="0" y="13.6" width="77" height="44" fill="#e0e3e7"/><rect x="5" y="21.0" width="26.8" height="0.55" fill="#b9bdc3"/><rect x="5" y="22.5" width="24.9" height="0.55" fill="#b9bdc3"/><rect x="5" y="24.0" width="28.1" height="0.55" fill="#b9bdc3"/><rect x="5" y="25.5" width="25.5" height="0.55" fill="#b9bdc3"/><rect x="5" y="27.0" width="27.8" height="0.55" fill="#b9bdc3"/><rect x="5" y="28.5" width="25.9" height="0.55" fill="#b9bdc3"/><rect x="5" y="30.0" width="27.6" height="0.55" fill="#b9bdc3"/><rect x="5" y="31.5" width="25.9" height="0.55" fill="#b9bdc3"/><rect x="5" y="36.0" width="29.2" height="0.55" fill="#b9bdc3"/><rect x="5" y="37.5" width="25.6" height="0.55" fill="#b9bdc3"/><rect x="5" y="39.0" width="27.6" height="0.55" fill="#b9bdc3"/><rect x="5" y="40.5" width="29.1" height="0.55" fill="#b9bdc3"/><rect x="5" y="42.0" width="28.0" height="0.55" fill="#b9bdc3"/><rect x="5" y="43.5" width="26.9" height="0.55" fill="#b9bdc3"/><rect x="5" y="45.0" width="28.9" height="0.55" fill="#b9bdc3"/><rect x="5" y="46.5" width="27.6" height="0.55" fill="#b9bdc3"/><rect x="40" y="21.0" width="25.9" height="0.55" fill="#b9bdc3"/><rect x="40" y="22.5" width="30.2" height="0.55" fill="#b9bdc3"/><rect x="40" y="24.0" width="30.3" height="0.55" fill="#b9bdc3"/><rect x="40" y="25.5" width="26.5" height="0.55" fill="#b9bdc3"/><rect x="40" y="27.0" width="26.1" height="0.55" fill="#b9bdc3"/><rect x="40" y="30.0" width="26.7" height="0.55" fill="#b9bdc3"/><rect x="40" y="31.5" width="30.2" height="0.55" fill="#b9bdc3"/><rect x="40" y="33.0" width="30.5" height="0.55" fill="#b9bdc3"/><rect x="40" y="34.5" width="28.0" height="0.55" fill="#b9bdc3"/><rect x="40" y="36.0" width="28.6" height="0.55" fill="#b9bdc3"/><rect x="40" y="37.5" width="29.3" height="0.55" fill="#b9bdc3"/><rect x="40" y="39.0" width="31.1" height="0.55" fill="#b9bdc3"/><rect x="40" y="40.5" width="29.5" height="0.55" fill="#b9bdc3"/><rect x="4" y="77" width="73" height="15" fill="#1b1a3c"/><g fill="#6fe0c8"><circle cx="10" cy="82" r="1.5"/><circle cx="17" cy="86" r="1.5"/><circle cx="23" cy="81" r="1.2"/></g><g fill="#e8eaf0"><ellipse cx="13" cy="85" rx="3" ry="2"/><ellipse cx="21" cy="84" rx="2.5" ry="1.6"/><ellipse cx="26" cy="88" rx="2" ry="1.4"/></g><circle cx="19" cy="80" r="1.2" fill="#e8a94e"/><rect x="34" y="80" width="10" height="1" fill="#cfd0e0"/><rect x="34" y="83" width="9" height="0.8" fill="#8a8aa8"/><rect x="34" y="86" width="12" height="2.6" fill="#c0394c"/><rect x="5" y="104" width="1" height="1" fill="#333"/><rect x="9" y="104" width="1" height="1" fill="#333"/></svg>
<div class="a" style="left:1192px;top:878px;width:318px;height:175px;background:#fff;"></div>
<div class="a" style="left:1510px;top:878px;width:2px;height:175px;background:#d9dbdf;"></div>
<div class="a" style="left:12px;top:1052px;width:1500px;height:1px;background:#d4d6da;"></div>
</div></div>
</body></html>
